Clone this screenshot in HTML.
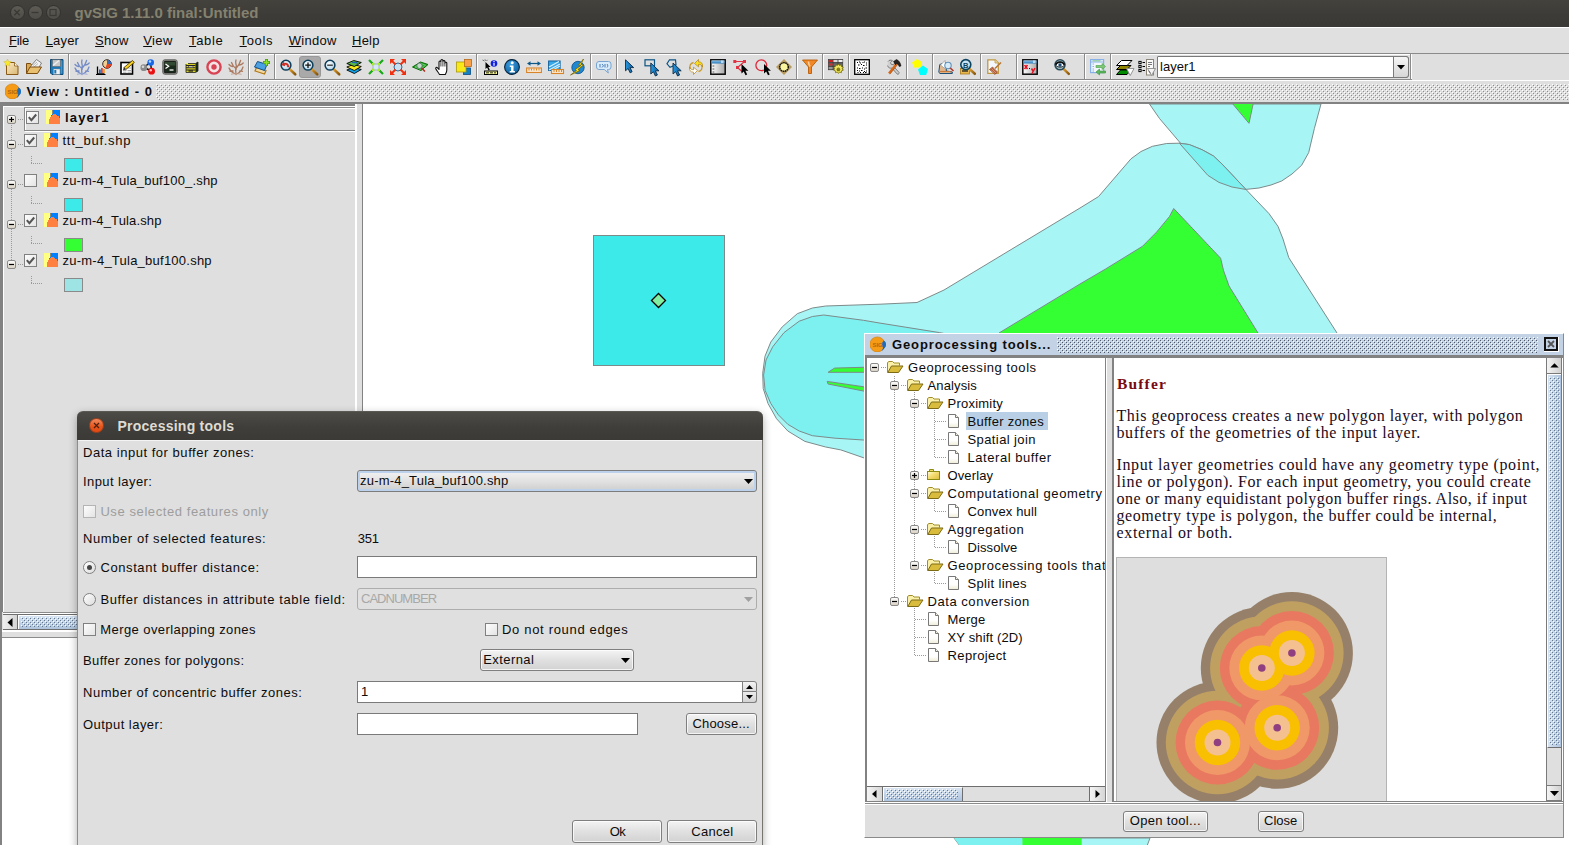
<!DOCTYPE html>
<html><head><meta charset="utf-8"><title>gvSIG</title>
<style>
html,body{margin:0;padding:0;}
body{width:1569px;height:845px;overflow:hidden;background:#e0e0e0;position:relative;font-family:"Liberation Sans",sans-serif;}
.t{position:absolute;white-space:pre;line-height:20px;font-family:"Liberation Sans",sans-serif;}
.sf{font-family:"Liberation Serif",serif;}
.b{font-weight:bold;}
.t u{text-decoration:underline;text-underline-offset:1px;text-decoration-thickness:1px;}
div,svg{box-sizing:border-box;}
.abs{position:absolute;}
.btn{position:absolute;border:1px solid #7f7f7f;border-radius:3px;background:linear-gradient(#f4f4f4,#e2e2e2 45%,#d2d2d2);box-shadow:inset 0 0 0 1px rgba(255,255,255,.75);}
.tf{position:absolute;background:#fff;border:1px solid #7a7a7a;}
.cb{position:absolute;width:13px;height:13px;border:1px solid #808080;background:linear-gradient(135deg,#fdfdfd,#e4e4e4);}
.rb{position:absolute;width:13px;height:13px;border:1px solid #808080;border-radius:50%;background:linear-gradient(135deg,#ffffff,#dcdcdc);}
.vs{position:absolute;width:1px;background:#8b8b8b;box-shadow:1px 0 0 #fff;}
</style></head>
<body>
<div style="position:absolute;left:0px;top:0px;width:1569px;height:27px;background:linear-gradient(#43423d,#3c3b37 60%,#3a3935);"></div>
<div style="position:absolute;left:9.5px;top:5.0px;width:15px;height:15px;border-radius:50%;background:linear-gradient(#5d5b54,#4f4d47);border:1px solid #33322e;"></div>
<div style="position:absolute;left:27.5px;top:5.0px;width:15px;height:15px;border-radius:50%;background:linear-gradient(#5d5b54,#4f4d47);border:1px solid #33322e;"></div>
<div style="position:absolute;left:45.5px;top:5.0px;width:15px;height:15px;border-radius:50%;background:linear-gradient(#5d5b54,#4f4d47);border:1px solid #33322e;"></div>
<svg class="abs" style="left:0;top:0" width="70" height="27"><path d="M14.300 9.800l5.400 5.400M19.700 9.800l-5.400 5.400" stroke="#3a3934" stroke-width="1.300" fill="none"/><path d="M31.500 12.500h7" stroke="#3a3934" stroke-width="1.300"/><rect x="50" y="9.500" width="6" height="6" stroke="#3a3934" stroke-width="1.200" fill="none"/></svg>
<span class="t b" style="left:74.5px;top:2.80px;font-size:15px;letter-spacing:-0.01px;color:#85816f;">gvSIG 1.11.0 final:Untitled</span>
<div style="position:absolute;left:0px;top:27px;width:1569px;height:26px;background:#e0e0e0;border-top:1px solid #fff;"></div>
<span class="t" style="left:9px;top:30.50px;font-size:13px;letter-spacing:-0.25px;color:#0c0c0c;"><u>F</u>ile</span>
<span class="t" style="left:45.7px;top:30.50px;font-size:13px;letter-spacing:0.17px;color:#0c0c0c;"><u>L</u>ayer</span>
<span class="t" style="left:95.1px;top:30.50px;font-size:13px;letter-spacing:0.22px;color:#0c0c0c;"><u>S</u>how</span>
<span class="t" style="left:143.2px;top:30.50px;font-size:13px;letter-spacing:0.42px;color:#0c0c0c;"><u>V</u>iew</span>
<span class="t" style="left:189px;top:30.50px;font-size:13px;letter-spacing:0.66px;color:#0c0c0c;"><u>T</u>able</span>
<span class="t" style="left:239.6px;top:30.50px;font-size:13px;letter-spacing:0.64px;color:#0c0c0c;"><u>T</u>ools</span>
<span class="t" style="left:288.7px;top:30.50px;font-size:13px;letter-spacing:0.29px;color:#0c0c0c;"><u>W</u>indow</span>
<span class="t" style="left:352px;top:30.50px;font-size:13px;letter-spacing:0.25px;color:#0c0c0c;"><u>H</u>elp</span>
<div style="position:absolute;left:0px;top:53px;width:1569px;height:1px;background:#8b8b8b;"></div>
<div style="position:absolute;left:0px;top:54px;width:1569px;height:1px;background:#fff;"></div>
<div style="position:absolute;left:0px;top:55px;width:1569px;height:24px;background:#dfdfdf;"></div>
<div style="position:absolute;left:0px;top:79px;width:1569px;height:1px;background:#8b8b8b;"></div>
<div style="position:absolute;left:0px;top:80px;width:1569px;height:1px;background:#fff;"></div>
<div class="vs" style="left:68px;top:54px;height:25px"></div>
<div class="vs" style="left:248px;top:54px;height:25px"></div>
<div class="vs" style="left:274px;top:54px;height:25px"></div>
<div class="vs" style="left:476px;top:54px;height:25px"></div>
<div class="vs" style="left:590px;top:54px;height:25px"></div>
<div class="vs" style="left:616px;top:54px;height:25px"></div>
<div class="vs" style="left:796px;top:54px;height:25px"></div>
<div class="vs" style="left:822px;top:54px;height:25px"></div>
<div class="vs" style="left:848px;top:54px;height:25px"></div>
<div class="vs" style="left:906px;top:54px;height:25px"></div>
<div class="vs" style="left:932px;top:54px;height:25px"></div>
<div class="vs" style="left:980px;top:54px;height:25px"></div>
<div class="vs" style="left:1016px;top:54px;height:25px"></div>
<div class="vs" style="left:1084px;top:54px;height:25px"></div>
<div class="vs" style="left:1110px;top:54px;height:25px"></div>
<div class="vs" style="left:1410px;top:54px;height:25px"></div>
<div style="position:absolute;left:1412px;top:54px;width:157px;height:26px;background:#dfdfdf;"></div>
<div style="position:absolute;left:299px;top:56px;width:22px;height:22px;background:#a9a9a9;border:1px solid #989898;border-radius:3px;"></div>
<div style="position:absolute;left:1157px;top:56px;width:252px;height:22px;border:1px solid #7a7a7a;background:#fff;border-radius:1px 3px 3px 1px;"></div>
<div style="position:absolute;left:1393px;top:56px;width:16px;height:22px;border:1px solid #7a7a7a;border-radius:0 3px 3px 0;background:linear-gradient(#f6f6f6,#d6d6d6);"></div>
<svg class="abs" style="left:1396px;top:64px" width="10" height="6"><path d="M1 1h8l-4 4.500z" fill="#000"/></svg>
<span class="t" style="left:1160px;top:56.50px;font-size:13px;letter-spacing:0.02px;color:#0c0c0c;">layer1</span>
<div style="position:absolute;left:0px;top:81px;width:1569px;height:21px;background:#dfdfdf;"></div>
<svg class="abs" style="left:156px;top:84px" width="1413" height="16" shape-rendering="crispEdges"><defs><pattern id="bp1" width="4" height="4" patternUnits="userSpaceOnUse"><rect width="4" height="4" fill="#dfdfdf"/><rect x="0" y="0" width="1" height="1" fill="#ffffff"/><rect x="2" y="2" width="1" height="1" fill="#ffffff"/><rect x="1" y="1" width="1" height="1" fill="#8c8c8c"/><rect x="3" y="3" width="1" height="1" fill="#8c8c8c"/></pattern></defs><rect width="1413" height="16" fill="url(#bp1)"/></svg>
<svg class="abs" style="left:5px;top:83px" width="16" height="16" viewBox="0 0 16 16"><circle cx="7.300" cy="8.400" r="7.500" fill="#f59b16"/><circle cx="7.300" cy="8.400" r="7.500" fill="none" stroke="#d07c08" stroke-width=".6"/><path d="M13.200 4.200c3.800 2.300 3.200 7.500-1.800 11c2.300-3.300 3-7 1.800-11z" fill="#1766b4"/><ellipse cx="14" cy="8.500" rx="1.900" ry="3.200" fill="#1a6cbc"/><text x="7.600" y="11.300" font-family="Liberation Sans" font-weight="bold" font-size="6" fill="#b4680c" text-anchor="middle">SIG</text></svg>
<span class="t b" style="left:26.5px;top:81.50px;font-size:13px;letter-spacing:0.96px;color:#0c0c0c;">View : Untitled - 0</span>
<div style="position:absolute;left:0px;top:102px;width:1569px;height:2px;background:#828282;"></div>
<svg width="0" height="0" style="position:absolute"><defs><linearGradient id="gTan" x1="0" y1="0" x2="1" y2="1"><stop offset="0" stop-color="#fbe9c4"/><stop offset="1" stop-color="#d9b772"/></linearGradient><linearGradient id="gHandle" x1="0" y1="0" x2="1" y2="1"><stop offset="0" stop-color="#e0a030"/><stop offset="1" stop-color="#8a5a10"/></linearGradient><radialGradient id="gLens" cx=".4" cy=".35" r=".7"><stop offset="0" stop-color="#ffffff"/><stop offset="1" stop-color="#a8d0e8"/></radialGradient><linearGradient id="gWin" x1="0" y1="0" x2="1" y2="0"><stop offset="0" stop-color="#ffffff"/><stop offset="1" stop-color="#a8a8a8"/></linearGradient><linearGradient id="gBlueT" x1="0" y1="0" x2="0" y2="1"><stop offset="0" stop-color="#8cc4ec"/><stop offset="1" stop-color="#2878b8"/></linearGradient><radialGradient id="gInfo" cx=".4" cy=".3" r=".8"><stop offset="0" stop-color="#3a9ce0"/><stop offset="1" stop-color="#0a5a98"/></radialGradient><linearGradient id="gCur" x1="0" y1="0" x2="1" y2="0"><stop offset="0" stop-color="#2a98e0"/><stop offset="1" stop-color="#0c5c9c"/></linearGradient></defs></svg>
<svg class="abs" style="left:4px;top:59px;overflow:visible" width="16" height="16" viewBox="0 0 16 16"><path d="M2.500 3.500h8l3.500 3.500v8.500h-11.500z" fill="url(#gTan)" stroke="#8a5a14" stroke-width="1"/><path d="M10.500 3.500v3.500h3.500" fill="#fff" stroke="#8a5a14" stroke-width=".8"/><path d="M3.500 0l1.100 2.400l2.600.3l-1.900 1.800l.5 2.600l-2.300-1.300l-2.300 1.300l.5-2.600l-1.900-1.800l2.600-.3z" fill="#f8e830" stroke="#c8b010" stroke-width=".4"/></svg>
<svg class="abs" style="left:26px;top:59px;overflow:visible" width="16" height="16" viewBox="0 0 16 16"><path d="M.5 14.500v-10h4l1 1.500h5v2" fill="#d9a850" stroke="#7a4c10" stroke-width="1"/><path d="M4 8l6.500-7.500l5 3.500l-3.500 6z" fill="#f4f4f4" stroke="#666" stroke-width=".8"/><path d="M7 6.500l4-3.500M8 8l4-3.500" stroke="#999" stroke-width=".7"/><path d="M.5 14.500l3.500-6.500h11.500l-4 6.500z" fill="#e8c070" stroke="#7a4c10" stroke-width="1"/></svg>
<svg class="abs" style="left:49px;top:59px;overflow:visible" width="16" height="16" viewBox="0 0 16 16"><path d="M1.500 .5h12.500v15h-11l-1.500-1.500z" fill="#1a78b8" stroke="#0c4a78" stroke-width="1"/><rect x="3.500" y=".8" width="8" height="6.700" fill="#c8c8c8" stroke="#666" stroke-width=".6"/><path d="M4 6.500l6-5" stroke="#eee" stroke-width="1.500"/><rect x="4.500" y="10" width="6.500" height="5.300" fill="#f0f0f0" stroke="#888" stroke-width=".5"/><rect x="5.300" y="11" width="2" height="3.500" fill="#1a78b8"/><path d="M12.800 1.500v13" stroke="#5ab0e8" stroke-width=".8"/></svg>
<svg class="abs" style="left:74px;top:59px;overflow:visible" width="16" height="16" viewBox="0 0 16 16"><g stroke="#6e86c4" stroke-width="1.300" fill="none" stroke-linecap="round" opacity=".95"><path d="M8 15.500c-.5-3-.5-6 .3-9.500M8.300 10c-2-1.500-4-4-4.800-6.500M8.300 9c2-2 3.500-4.500 4.300-7.500M6.500 14.500c-2.500-1-4.500-3-5.500-5.500M9.500 14.500c2.500-1 4.500-3.500 5.500-6.500M4.500 7.500c-1.300-.3-2.500-1-3.500-2M11.500 6c1.500-.3 2.800-1 3.700-2M8 5.500c-.5-1.500-.5-3 0-4.500M5 12c-1-.2-2-.2-3 .3M11.500 12c1-.3 2-.2 3 .3"/></g><path d="M3 15.300c3-.8 7-.8 10.500 0" stroke="#8ea0d0" stroke-width="1" fill="none" opacity=".8"/></svg>
<svg class="abs" style="left:96px;top:59px;overflow:visible" width="16" height="16" viewBox="0 0 16 16"><circle cx="11" cy="5" r="4.300" fill="#f0d090" stroke="#3a2a20" stroke-width="1"/><path d="M11 5v-4.300a4.300 4.300 0 0 1 4.300 4.300z" fill="#3868b8"/><path d="M11 5h4.300a4.300 4.300 0 0 1 -6 3.900z" fill="#e04828"/><path d="M1.500 7.500v7.500h7" stroke="#000" stroke-width="1.300" fill="none"/><rect x="3" y="10.500" width="1.800" height="3.500" fill="#3060b0"/><rect x="5" y="9" width="1.800" height="5" fill="#e04828"/><rect x="7" y="10" width="1.800" height="4" fill="#e8a020"/><path d="M0 15.500h9.500" stroke="#000" stroke-width="1"/></svg>
<svg class="abs" style="left:120px;top:59px;overflow:visible" width="16" height="16" viewBox="0 0 16 16"><rect x="1" y="3.500" width="11.500" height="11.500" fill="#fff" stroke="#000" stroke-width="1.600"/><path d="M3 9h3.500M7.500 9h3.500M3 11.500h3.500M7.500 11.500h3.500M3 13.200h3.500M7.500 13.200h3.500" stroke="#aaa" stroke-width="1"/><path d="M4 8.500l8.500-7l1.800 2l-8.500 7z" fill="#f8d020" stroke="#3a2a00" stroke-width=".8"/><path d="M4 8.500l-1 2.800l2.800-.8z" fill="#222"/></svg>
<svg class="abs" style="left:140px;top:59px;overflow:visible" width="16" height="16" viewBox="0 0 16 16"><path d="M4 8.500l6.500-5.500M10.500 3.500l1 8M4 8.500l7.500 3.500" stroke="#111" stroke-width="1.500"/><circle cx="3.800" cy="8.700" r="3.400" fill="#8a8a8a"/><circle cx="3" cy="7.800" r="1.300" fill="#d8d8d8"/><circle cx="10.700" cy="3.500" r="3.300" fill="#1868e8"/><circle cx="10" cy="2.500" r="1.200" fill="#b8d8ff"/><circle cx="11.600" cy="12.200" r="3.400" fill="#e81010"/><circle cx="10.800" cy="11.200" r="1.200" fill="#ffc0c0"/></svg>
<svg class="abs" style="left:162px;top:59px;overflow:visible" width="16" height="16" viewBox="0 0 16 16"><rect x=".7" y=".7" width="14.600" height="14.600" rx="2.200" fill="#8c8c84" stroke="#555" stroke-width=".8"/><rect x="2.300" y="2.300" width="11.400" height="11.400" rx=".8" fill="#1a2a1a" stroke="#000" stroke-width=".6"/><path d="M2.600 3h10.800v3.500h-10.800z" fill="#3a5238" opacity=".8"/><path d="M3.500 5l3.200 2.200l-3.200 2.200" stroke="#fff" stroke-width="1.200" fill="none"/><path d="M7.500 11h4" stroke="#fff" stroke-width="1.300"/></svg>
<svg class="abs" style="left:185px;top:59px;overflow:visible" width="16" height="16" viewBox="0 0 16 16"><path d="M1 4.500h9.500l2.500-1.500v9l-2.500 1.500h-9.500z" fill="#d8d020" stroke="#222" stroke-width=".8"/><path d="M10.500 4.500l2.500-1.500v9l-2.500 1.500z" fill="#1a2a10"/><path d="M1 6.500h9.500M1 8.800h9.500M1 11h9.500" stroke="#222" stroke-width="1.100"/><rect x="3.500" y="7" width="4.500" height="1.500" fill="#f0f0e0" stroke="#222" stroke-width=".5"/><rect x="3.500" y="11.300" width="4.500" height="1.300" fill="#222"/><path d="M0 4.500h3" stroke="#f0f080" stroke-width="1"/></svg>
<svg class="abs" style="left:206px;top:59px;overflow:visible" width="16" height="16" viewBox="0 0 16 16"><circle cx="8" cy="8" r="6.600" fill="#f4e4e4" stroke="#d84454" stroke-width="2.400"/><circle cx="8" cy="8" r="2.700" fill="#d84454"/></svg>
<svg class="abs" style="left:228px;top:59px;overflow:visible" width="16" height="16" viewBox="0 0 16 16"><g stroke="#a87458" stroke-width="1.300" fill="none" stroke-linecap="round" opacity=".95"><path d="M8 15.500c-.5-3-.5-6 .3-9.500M8.300 10c-2-1.500-4-4-4.800-6.500M8.300 9c2-2 3.500-4.500 4.300-7.500M6.500 14.500c-2.500-1-4.500-3-5.500-5.500M9.500 14.500c2.500-1 4.500-3.500 5.500-6.500M4.500 7.500c-1.300-.3-2.500-1-3.500-2M11.500 6c1.500-.3 2.800-1 3.700-2M8 5.500c-.5-1.500-.5-3 0-4.500M5 12c-1-.2-2-.2-3 .3M11.500 12c1-.3 2-.2 3 .3"/></g><path d="M3 15.300c3-.8 7-.8 10.500 0" stroke="#c09888" stroke-width="1" fill="none" opacity=".8"/></svg>
<svg class="abs" style="left:254px;top:59px;overflow:visible" width="16" height="16" viewBox="0 0 16 16"><path d="M2.500 8.500l9.500 3l-1.500 3.500l-9.500-3z" fill="#f0d8a0" stroke="#b07818" stroke-width="1.200"/><path d="M3.500 2.500l9.500 3l-2.500 6l-10-3.500z" fill="#4aa0e0" stroke="#10508c" stroke-width="1"/><path d="M12.500 0v7M9 3.500h7" stroke="#48a010" stroke-width="3"/><path d="M12.500 .8v5.400M9.800 3.500h5.400" stroke="#90e030" stroke-width="1.400"/></svg>
<svg class="abs" style="left:279.5px;top:58.5px;overflow:visible" width="16" height="17" viewBox="0 0 16 17"><path d="M10 10.500l5.200 4.800" stroke="url(#gHandle)" stroke-width="2.600" stroke-linecap="round"/><path d="M10 10.500l5.200 4.800" stroke="#7a4c08" stroke-width=".5" fill="none" opacity=".6" transform="translate(.9 .9)"/><circle cx="6" cy="6.200" r="4.900" fill="url(#gLens)" stroke="#0c3c58" stroke-width="1.500"/><path transform="translate(12 .4) scale(-1 1)" d="M3 7.500c0-3 2.500-4.500 5-3.500l.3-1.500l2 3l-3.300 1l.4-1.300c-1.500-.5-3 .5-2.800 2.300z" fill="#e02818" stroke="#a01008" stroke-width=".4"/></svg>
<svg class="abs" style="left:301.5px;top:58.5px;overflow:visible" width="16" height="17" viewBox="0 0 16 17"><path d="M10 10.500l5.200 4.800" stroke="url(#gHandle)" stroke-width="2.600" stroke-linecap="round"/><path d="M10 10.500l5.200 4.800" stroke="#7a4c08" stroke-width=".5" fill="none" opacity=".6" transform="translate(.9 .9)"/><circle cx="6" cy="6.200" r="4.900" fill="url(#gLens)" stroke="#0c3c58" stroke-width="1.500"/><path d="M6 3.400v5.600M3.200 6.200h5.600" stroke="#111" stroke-width="1.300"/></svg>
<svg class="abs" style="left:323.5px;top:58.5px;overflow:visible" width="16" height="17" viewBox="0 0 16 17"><path d="M10 10.500l5.200 4.800" stroke="url(#gHandle)" stroke-width="2.600" stroke-linecap="round"/><path d="M10 10.500l5.200 4.800" stroke="#7a4c08" stroke-width=".5" fill="none" opacity=".6" transform="translate(.9 .9)"/><circle cx="6" cy="6.200" r="4.900" fill="url(#gLens)" stroke="#0c3c58" stroke-width="1.500"/><path d="M3.200 6.200h5.600" stroke="#333" stroke-width="1.300"/></svg>
<svg class="abs" style="left:346px;top:59px;overflow:visible" width="16" height="16" viewBox="0 0 16 16"><path d="M.8 11l6.500-2.500l8 2l-7 4z" fill="#10a0e8" stroke="#000" stroke-width=".9"/><path d="M.8 8l6.500-2.500l8 2l-7 4z" fill="#f8e820" stroke="#000" stroke-width=".9"/><path d="M.8 4.500l7-3l7.500 2l-7 4z" fill="#58b848" stroke="#000" stroke-width=".9"/><path d="M6 3.500c1.500-1 3 1 4.500 0c1 .5 1 1.500 .5 2" stroke="#1858c0" stroke-width="1.200" fill="none"/></svg>
<svg class="abs" style="left:368px;top:59px;overflow:visible" width="16" height="16" viewBox="0 0 16 16"><path d="M1 1l14 14M15 1l-14 14" stroke="#18a818" stroke-width="2.200"/><rect x="5" y="5" width="6" height="6" fill="#d8e8f8" stroke="#90a8c8" stroke-width=".8"/><rect x="4" y="4" width="2.300" height="2.300" fill="#a8f020"/><rect x="9.700" y="4" width="2.300" height="2.300" fill="#a8f020"/><rect x="4" y="9.700" width="2.300" height="2.300" fill="#a8f020"/><rect x="9.700" y="9.700" width="2.300" height="2.300" fill="#a8f020"/></svg>
<svg class="abs" style="left:390px;top:59px;overflow:visible" width="16" height="16" viewBox="0 0 16 16"><circle cx="8" cy="8" r="4" fill="#c8e0f0" stroke="#306890" stroke-width="1"/><path d="M5.500 5.500l-4-4M10.500 5.500l4-4M5.500 10.500l-4 4M10.500 10.500l4 4" stroke="#f03010" stroke-width="2"/><path d="M0 0h5l-5 5zM16 0h-5l5 5zM0 16h5l-5-5zM16 16h-5l5-5z" fill="#f03010"/></svg>
<svg class="abs" style="left:412px;top:59px;overflow:visible" width="16" height="16" viewBox="0 0 16 16"><path d="M.5 8l8-5l7.500 2.500l-7 6z" fill="#28a828" stroke="#0c6c0c" stroke-width="1"/><path d="M3 8l5.500-3.500l5 1.700l-5 4z" fill="none" stroke="#7ae07a" stroke-width=".7"/><circle cx="7.500" cy="6.800" r="2.700" fill="#c8d8d0" stroke="#587868" stroke-width=".9"/><path d="M9.500 9l3.500 3.500" stroke="#a83020" stroke-width="1.600"/></svg>
<svg class="abs" style="left:435px;top:59px;overflow:visible" width="16" height="16" viewBox="0 0 16 16"><path d="M4.500 15.500c-1-2-3-4-3.800-6c-.3-1 1-1.600 1.800-.7l1.500 1.700v-7.500c0-1.300 1.900-1.300 1.900 0v-1.500c0-1.300 2-1.300 2 0v1c0-1.200 2-1.200 2 0v1.500c0-1.100 1.900-1.100 1.900 0v7c0 2-1 3.500-1.500 4.500z" fill="#fff" stroke="#111" stroke-width="1.100" stroke-linejoin="round"/><path d="M5.900 3.500v4M7.900 3v4.500M9.900 4v3.500" stroke="#111" stroke-width=".8"/></svg>
<svg class="abs" style="left:456px;top:59px;overflow:visible" width="16" height="16" viewBox="0 0 16 16"><rect x="7.500" y="9" width="7" height="6.500" fill="#1080c8" stroke="#0a4a80" stroke-width=".8"/><rect x=".5" y="3" width="9.500" height="10" fill="#f8e818" stroke="#a89808" stroke-width=".8"/><rect x="8.500" y=".5" width="7" height="7" fill="#f8a048" stroke="#b86818" stroke-width=".8"/></svg>
<svg class="abs" style="left:482px;top:59px;overflow:visible" width="16" height="16" viewBox="0 0 16 16"><circle cx="12" cy="4.500" r="3.300" fill="#1020e0"/><rect x="11.400" y="3.800" width="1.200" height="3" fill="#fff"/><rect x="11.400" y="2" width="1.200" height="1.100" fill="#fff"/><path d="M.5 1l2 1M3 .3l.5 1.500M5.500 .8l-1 1.200" stroke="#444" stroke-width=".7"/><path d="M3.500 3v7l1.600-1.400l1.400 2.800l1.300-.6l-1.400-2.800h2.200z" fill="#000"/><rect x="2.500" y="12" width="13" height="3.500" fill="#f4f490" stroke="#000" stroke-width="1"/><path d="M4 13.800h3M8 13.800h3M12 13.800h2" stroke="#000" stroke-width=".8"/></svg>
<svg class="abs" style="left:504px;top:59px;overflow:visible" width="16" height="16" viewBox="0 0 16 16"><circle cx="8" cy="8" r="7.400" fill="url(#gInfo)" stroke="#06243c" stroke-width="1.100"/><circle cx="8.200" cy="3.800" r="1.500" fill="#fff"/><path d="M5.800 6.500h3.700v5.500h1.400v1.400h-5.200v-1.400h1.400v-4h-1.300z" fill="#fff"/></svg>
<svg class="abs" style="left:526px;top:59px;overflow:visible" width="16" height="16" viewBox="0 0 16 16"><path d="M3 4.500h10" stroke="#0c5888" stroke-width="1.200"/><path d="M1 4.500l3.500-2.300v4.600zM15 4.500l-3.500-2.300v4.600z" fill="#0c5888"/><rect x=".6" y="9" width="14.8" height="4.500" fill="#fbe8d0" stroke="#d88428" stroke-width="1.100"/><path d="M3 9.500v2M5.500 9.500v2M8 9.500v2M10.500 9.500v2M13 9.500v2" stroke="#d88428" stroke-width="1"/></svg>
<svg class="abs" style="left:548px;top:59px;overflow:visible" width="16" height="16" viewBox="0 0 16 16"><rect x=".6" y="2" width="11.500" height="9.500" fill="#38a8e8" stroke="#10609c" stroke-width="1"/><path d="M1 8l10-5.500M1 11l11-6M4 11.500l8-4.500" stroke="#d8f0ff" stroke-width="1.200"/><rect x="3.500" y="10.500" width="12" height="4" fill="#fbe8d0" stroke="#d88428" stroke-width="1.100"/><path d="M6 11v2M8.500 11v2M11 11v2M13.500 11v2" stroke="#d88428" stroke-width="1"/></svg>
<svg class="abs" style="left:570px;top:59px;overflow:visible" width="16" height="16" viewBox="0 0 16 16"><circle cx="8" cy="8.500" r="6.200" fill="#2088d0" stroke="#0c4c88" stroke-width=".8"/><path d="M13.500 0l-5 6l2.500.5l-6 4l1.500 1l-6 4.500l9.500-4.500l-2-1l5.500-4.500l-2.500-.5z" fill="#f8e010" stroke="#705800" stroke-width=".7" stroke-linejoin="round"/></svg>
<svg class="abs" style="left:596px;top:59px;overflow:visible" width="16" height="16" viewBox="0 0 16 16"><path d="M3 2.500h9.500a2.500 2.500 0 0 1 2.500 2.500v3a2.500 2.500 0 0 1 -2.500 2.500h-1l.8 3.500l-4-3.500h-5.300a2.500 2.500 0 0 1 -2.500-2.500v-3a2.500 2.500 0 0 1 2.500-2.500z" fill="#d8ecfc" stroke="#7aa4d0" stroke-width="1"/><path d="M4 5v3.500M6 5l1.500 1.800l-1.500 1.700M9 5v3.500M11 5c1 1 1 2.500 0 3.500" stroke="#4a7ab8" stroke-width="1" fill="none"/></svg>
<svg class="abs" style="left:622px;top:59px;overflow:visible" width="16" height="16" viewBox="0 0 16 16"><path transform="translate(3.5 0.8)" d="M0 0v11l2.600-2.300l2 4.300l2-1l-2-4.200h3.600z" fill="url(#gCur)" stroke="#0a2c48" stroke-width=".9" stroke-linejoin="round"/></svg>
<svg class="abs" style="left:644px;top:59px;overflow:visible" width="16" height="16" viewBox="0 0 16 16"><rect x="1" y=".8" width="9.500" height="6" fill="none" stroke="#0c5484" stroke-width="1.200"/><path transform="translate(6.8 4)" d="M0 0v11l2.600-2.300l2 4.300l2-1l-2-4.200h3.600z" fill="url(#gCur)" stroke="#0a2c48" stroke-width=".9" stroke-linejoin="round"/></svg>
<svg class="abs" style="left:666px;top:59px;overflow:visible" width="16" height="16" viewBox="0 0 16 16"><path d="M3.500 .8h6l.5 5l-6 2.500l-3-3.500z" fill="none" stroke="#0c5484" stroke-width="1.200"/><path transform="translate(7 4)" d="M0 0v11l2.600-2.300l2 4.300l2-1l-2-4.200h3.600z" fill="url(#gCur)" stroke="#0a2c48" stroke-width=".9" stroke-linejoin="round"/></svg>
<svg class="abs" style="left:688px;top:59px;overflow:visible" width="16" height="16" viewBox="0 0 16 16"><path d="M2.500 10c-1.500-3 0-6 3-6.500" stroke="#c89828" stroke-width="1.300" fill="none"/><path d="M13.500 6c1.500 3 0 6-3 6.500" stroke="#c89828" stroke-width="1.300" fill="none"/><path d="M6.500 4.500l4-4v2.300c3 0 4.500 2 4 5c-.8-1.800-2-2.500-4-2.500v2.500z" fill="#f8e020" stroke="#b08010" stroke-width=".7"/><path d="M9.500 11.500l-4 4v-2.300c-3 0-4.500-2-4-5c.8 1.800 2 2.500 4 2.500v-2.500z" fill="#fff" stroke="#b08010" stroke-width=".7"/></svg>
<svg class="abs" style="left:710px;top:59px;overflow:visible" width="16" height="16" viewBox="0 0 16 16"><rect x=".8" y=".8" width="14.400" height="14.400" fill="url(#gWin)" stroke="#0a0a0a" stroke-width="1.500"/><rect x="1.500" y="1.500" width="13" height="3" fill="url(#gBlueT)"/><rect x="11" y="1.500" width="2.500" height="2.500" fill="#b8d8f4"/><path d="M2.500 7h1.800M2.500 10h1.800M2.500 13h1.800" stroke="#555" stroke-width="1"/></svg>
<svg class="abs" style="left:733px;top:59px;overflow:visible" width="16" height="16" viewBox="0 0 16 16"><path d="M1.500 2.500h10l-7 6l5 4.500" stroke="#e03444" stroke-width="1.200" fill="none"/><rect x=".3" y="1" width="3" height="3" fill="#e03444"/><rect x="10" y="1" width="3" height="3" fill="#e03444"/><rect x="3" y="7" width="3" height="3" fill="#e03444"/><path transform="translate(8.5 5)" d="M0 0v9.500l2.200-2l1.800 3.800l1.700-.8l-1.800-3.700h3z" fill="#000"/></svg>
<svg class="abs" style="left:754.5px;top:59px;overflow:visible" width="16" height="16" viewBox="0 0 16 16"><circle cx="6.300" cy="6.300" r="5.400" fill="none" stroke="#e02838" stroke-width="1.300"/><path transform="translate(9 5)" d="M0 0v9.500l2.200-2l1.800 3.800l1.700-.8l-1.800-3.700h3z" fill="#000"/></svg>
<svg class="abs" style="left:776px;top:59px;overflow:visible" width="16" height="16" viewBox="0 0 16 16"><path d="M8 0l8 8l-8 8l-8-8z" fill="#b89a5c"/><circle cx="8" cy="8" r="4.300" fill="#f8f4a0" stroke="#111" stroke-width="1.500" stroke-dasharray="1.600 .5"/></svg>
<svg class="abs" style="left:802px;top:59px;overflow:visible" width="16" height="16" viewBox="0 0 16 16"><path d="M.5 1h15l-6 7v6.500h-3v-6.500z" fill="#f08828" stroke="#b85c08" stroke-width=".9" stroke-linejoin="round"/><path d="M6.500 2.500c0 2 .8 4 1.500 5" stroke="#fcd0a0" stroke-width="1.600" fill="none"/></svg>
<svg class="abs" style="left:828px;top:59px;overflow:visible" width="16" height="16" viewBox="0 0 16 16"><rect x=".3" y=".3" width="14.500" height="10.500" fill="#6a6a6a" stroke="#333" stroke-width=".6"/><path d="M.3 3.800h14.500M.3 7.300h14.500M5 .3v10.500M10 .3v10.500" stroke="#333" stroke-width=".7"/><rect x=".8" y="1" width="3.800" height="2" fill="#e01818"/><rect x=".8" y="4.500" width="3.800" height="2" fill="#c83030"/><rect x="5.500" y="1" width="4" height="2" fill="#d8d8d8"/><rect x="10.500" y="1" width="4" height="2" fill="#f0f0f0"/><rect x=".8" y="8" width="3.800" height="2" fill="#999"/><path d="M10.500 4.500l1.300 1.700l2-.9l.2 2.200l2 .6l-1.200 1.800l1.200 1.700l-2 .7l-.2 2.200l-2-.9l-1.300 1.700l-1.300-1.700l-2 .9l-.2-2.200l-2-.7l1.200-1.700l-1.200-1.800l2-.6l.2-2.200l2 .9z" fill="#f0e860" stroke="#6a6000" stroke-width=".8" transform="translate(1.200 1) scale(.88)"/><circle cx="10.400" cy="10.400" r="1.500" fill="#8a8420" stroke="#4a4400" stroke-width=".5"/></svg>
<svg class="abs" style="left:854px;top:59px;overflow:visible" width="16" height="16" viewBox="0 0 16 16"><rect x=".7" y=".7" width="14.600" height="14.600" fill="#fff" stroke="#000" stroke-width="1.300"/><rect x="3" y="3" width="1" height="1" fill="#000"/><rect x="5" y="2.5" width="1" height="1" fill="#000"/><rect x="6" y="3.5" width="1" height="1" fill="#000"/><rect x="8.5" y="3" width="1" height="1" fill="#000"/><rect x="10" y="2.5" width="1" height="1" fill="#000"/><rect x="12" y="3.5" width="1" height="1" fill="#000"/><rect x="4" y="5.5" width="1.5" height="1" fill="#000"/><rect x="7" y="5" width="1" height="1" fill="#000"/><rect x="9" y="6" width="1.5" height="1" fill="#000"/><rect x="12" y="5.5" width="1" height="1" fill="#000"/><rect x="3" y="8.5" width="1" height="1" fill="#000"/><rect x="5" y="9" width="1.5" height="1" fill="#000"/><rect x="8" y="8.5" width="1" height="1" fill="#000"/><rect x="10" y="9.5" width="1" height="1" fill="#000"/><rect x="11.5" y="8.5" width="1.5" height="1" fill="#000"/><rect x="3" y="11" width="1" height="1" fill="#000"/><rect x="5" y="11.5" width="1" height="1" fill="#000"/><rect x="7" y="11" width="1.5" height="1" fill="#000"/><rect x="10" y="12" width="1" height="1" fill="#000"/><rect x="12" y="11.5" width="1" height="1" fill="#000"/><rect x="3.5" y="13" width="1" height="1" fill="#000"/><rect x="6" y="13" width="1" height="1" fill="#000"/><rect x="9" y="13" width="1" height="1" fill="#000"/><rect x="11" y="13" width="1.5" height="1" fill="#000"/></svg>
<svg class="abs" style="left:886px;top:59px;overflow:visible" width="16" height="16" viewBox="0 0 16 16"><path d="M2 2.500c1-1.500 3-1.800 4.500-.8l-2 2l.8 1.700l2 .3l1.700-2c.8 1.500.3 3.300-1 4.200l5 5.500c.8 1-1 2.500-2 1.500l-5-5.800c-2 .5-4-.5-4.500-2.500" fill="#d0d0d0" stroke="#666" stroke-width=".8"/><path d="M3 14.500l7.500-9.500" stroke="#d86818" stroke-width="2.400"/><path d="M3 14.500l7.500-9.500" stroke="#8a3c08" stroke-width=".5" transform="translate(1 .7)"/><path d="M7.500 2.500l3-2c2.500 1 4 3.500 4.500 6.500l-1.800.5c-.5-1.500-1.500-2.500-2.700-2.800l-1 1z" fill="#2a2420" stroke="#000" stroke-width=".5"/></svg>
<svg class="abs" style="left:912px;top:59px;overflow:visible" width="17" height="16" viewBox="0 0 17 16"><path d="M5 0l5 3l-1.500 5.500h-6.500l-2-5z" fill="#ffff00"/><path d="M11 6.500l5 3.500l-1.800 6h-6.200l-2-5.500z" fill="#00ffff"/></svg>
<svg class="abs" style="left:938px;top:59px;overflow:visible" width="16" height="16" viewBox="0 0 16 16"><path d="M.8 13l1-7.500l5.500-2l1 .5v8l6 1v1.500h-12.500z" fill="#e0b890" stroke="#1a5078" stroke-width="1"/><path d="M2.500 6l4.500-4.500l1 9z" fill="#fff" stroke="#888" stroke-width=".6"/><path d="M1.500 12.500h11" stroke="#c87838" stroke-width="1.200"/><circle cx="10" cy="6.500" r="3.200" fill="#d8ecf8" stroke="#6090b8" stroke-width="1.100"/><path d="M12.300 9l3.200 3" stroke="#b83828" stroke-width="1.600"/></svg>
<svg class="abs" style="left:960px;top:59px;overflow:visible" width="16" height="16" viewBox="0 0 16 16"><rect x=".5" y="9.500" width="9" height="5.500" fill="#e8b850" stroke="#a87818" stroke-width=".8"/><path d="M2 12h6" stroke="#111" stroke-width="1.200"/><path d="M9.500 10l5.300 4.800" stroke="url(#gHandle)" stroke-width="2.500" stroke-linecap="round"/><circle cx="5.800" cy="5.600" r="5" fill="#c8e4f4" stroke="#0c4460" stroke-width="1.600"/><text x="5.800" y="8.500" text-anchor="middle" font-family="Liberation Sans" font-weight="bold" font-size="7.500" fill="#0c4460">B</text></svg>
<svg class="abs" style="left:987px;top:59px;overflow:visible" width="16" height="16" viewBox="0 0 16 16"><path d="M.8 .8h7.500l3 3v10.500h-10.500z" fill="#f4f8fc" stroke="#c09840" stroke-width="1.300"/><path d="M8 .8v3.200h3.300" fill="#e8d8a0" stroke="#c09840" stroke-width=".8"/><path d="M14 3.500l-6 6" stroke="#b87838" stroke-width="1.600"/><path d="M5.500 8l5 5l-2.500 2.500l-5.500-5z" fill="#b85c38" stroke="#7a3818" stroke-width=".6"/><path d="M4.500 9.500l4.500 4.500M6 8.500l4 4M3.500 11l4 3.500" stroke="#e8c0a0" stroke-width=".6"/></svg>
<svg class="abs" style="left:1022px;top:59px;overflow:visible" width="16" height="16" viewBox="0 0 16 16"><rect x=".8" y=".8" width="14.400" height="14.400" fill="url(#gWin)" stroke="#0a0a0a" stroke-width="1.500"/><rect x="1.500" y="1.500" width="13" height="3" fill="url(#gBlueT)"/><rect x="11" y="1.500" width="2.500" height="2.500" fill="#b8d8f4"/><path d="M2.500 6l3 4M5.500 6l-3 4" stroke="#e81020" stroke-width="1.500"/><path d="M9.500 9.500l1.500 2.500M13 9l-3 5.500" stroke="#e81020" stroke-width="1.500"/><rect x="7" y="9" width="1" height="1" fill="#111"/></svg>
<svg class="abs" style="left:1054px;top:59px;overflow:visible" width="16" height="16" viewBox="0 0 16 16"><path d="M9.500 9.800l5.300 5" stroke="url(#gHandle)" stroke-width="2.500" stroke-linecap="round"/><circle cx="6" cy="5.800" r="5" fill="#c8d8d8" stroke="#2a4a58" stroke-width="1.600"/><circle cx="6" cy="5.800" r="3.600" fill="none" stroke="#7aa8b0" stroke-width=".8"/><path d="M1.800 6.200c2-3.500 6.500-3.500 8.500 0c-2 2.500-6.500 2.500-8.500 0z" fill="#fff" stroke="#000" stroke-width=".9"/><circle cx="6" cy="6" r="1.700" fill="#184878"/><path d="M1.500 5.500c2-3.500 7-3.500 9 0" stroke="#000" stroke-width="1.300" fill="none"/></svg>
<svg class="abs" style="left:1090px;top:59px;overflow:visible" width="16" height="16" viewBox="0 0 16 16"><rect x=".6" y=".6" width="13" height="13" fill="#f0f6fc" stroke="#88b0e8" stroke-width="1.200"/><path d="M1 3h12" stroke="#88b0e8" stroke-width="1"/><path d="M2.500 1.800h8" stroke="#70c070" stroke-width=".8"/><path d="M2.500 5h1.500M2.500 7.500h1.500M2.500 10h1.500M2.500 12h1.500" stroke="#88b0e8" stroke-width="1.200"/><path d="M6 6.500h6v-2l3.500 3l-3.500 3v-2h-6z" fill="#80c878" stroke="#48a048" stroke-width=".6"/><path d="M15.500 12h-6v-2l-3.500 3l3.500 3v-2h6z" fill="#60b860" stroke="#389038" stroke-width=".6"/></svg>
<svg class="abs" style="left:1115px;top:59px;overflow:visible" width="20" height="17" viewBox="0 0 20 17"><path d="M1.500 15.500l4-4.500h10.500l-4 4.500z" fill="#008a00" stroke="#000" stroke-width="1"/><path d="M1.500 10.500l4-4h10.500l-4 4z" fill="#8c8400" stroke="#000" stroke-width="1"/><path d="M1.500 6.500l5-5h10.500l-5 5z" fill="#fff" stroke="#000" stroke-width="1"/><path d="M11.500 9.500h7.500l-3.750 7z" fill="#fff" stroke="#8a8a8a" stroke-width=".9"/></svg>
<svg class="abs" style="left:1138px;top:59px;overflow:visible" width="18" height="17" viewBox="0 0 18 17"><rect x="8.500" y=".5" width="7" height="15.500" fill="#fbfbfb" stroke="#8a8478" stroke-width="1"/><path d="M10 3.500h4M10 5.500h4M10 7.500h2" stroke="#555" stroke-width=".8"/><rect x=".9" y="2.400" width="2.200" height="2.200" fill="#fff" stroke="#000" stroke-width="1"/><rect x=".9" y="6.400" width="2.200" height="2.200" fill="#fff" stroke="#000" stroke-width="1"/><rect x=".9" y="10.400" width="2.200" height="2.200" fill="#fff" stroke="#000" stroke-width="1"/><path d="M4.500 3.500h2.500M4.500 7.500h2.500M4.500 11.500h2.500" stroke="#000" stroke-width="1.100"/><path d="M9.500 9.500h8l-4 7z" fill="#f4f4f4" stroke="#8a8a8a" stroke-width=".9"/><path d="M10.800 11.800l1.700 2.500" stroke="#555" stroke-width=".8"/></svg>
<svg class="abs" style="left:363px;top:104px" width="1206" height="741" viewBox="363 104 1206 741">
<rect x="363" y="104" width="1206" height="741" fill="#fff"/>
<rect x="593.500" y="235.500" width="131" height="130" fill="#3deaea" stroke="#7d8a8a" stroke-width="1"/>
<path d="M658.500 293.500l7 7l-7 7l-7-7z" fill="#80f0a0" stroke="#000" stroke-width="1.300"/>
<polygon points="1149.500,104 1159.500,118.500 1207.800,175.300 1219,182.400 1232,187 1244.800,189.500 1259,188 1271,185 1281.700,181 1292,174 1301.600,165.300 1308.700,152.600 1314.400,128.400 1321,104" fill="#a8f5f5" stroke="#7d8a8a" stroke-width="1"/>
<polygon points="880,304.200 917,302.500 944,290 1080,208 1098.500,196.600 1131,158.800 1141,151.500 1152.400,146.300 1166.600,143.500 1179.400,143.200 1189.400,144.600 1202,149.700 1213.500,156 1222,164 1246,189.500 1269,213.600 1278,226.400 1283,239 1288.800,257.700 1337,333 1350,353 1350,460 870,460 840.800,449.900 825.700,447 804.900,441.400 787.800,431 776.500,418.700 768,403.500 763.200,388.400 762.700,373.300 765,356.200 770.800,342 782.200,326.900 797.300,313.700 812.400,308 825.700,306" fill="#a8f5f5" stroke="#7d8a8a" stroke-width="1"/>
<polygon points="1179.400,143.200 1189.400,144.600 1202,149.700 1213.500,156 1222,164 1246,189.500 1232,187 1219,182.400 1207.800,175.300" fill="#7df0f0" stroke="#7d8a8a" stroke-width="1"/>
<polygon points="823.800,315 863.500,320.300 880,323.100 939.600,332.600 1000,345 1000,460 870,445 863.500,440 835.100,438.200 812.400,435.700 799.200,431 787.800,424.300 778.400,414.900 770.800,403.500 765.100,390.300 763.600,375.100 766,360 772.700,346.800 784,332.600 799.200,321.200 812.400,316.500" fill="#7df0f0" stroke="#7d8a8a" stroke-width="1"/>
<polygon points="999,333 1080,284 1105.600,269 1142.500,246.300 1156.700,232 1169.500,216.500 1173.700,208.500 1220.600,258.200 1223.500,270.500 1229,286 1258,333 1258,345 999,345" fill="#33ff33" stroke="#7d8a8a" stroke-width="1"/>
<polygon points="1232,103 1249,123.300 1253.300,103" fill="#33ff33" stroke="#7d8a8a" stroke-width="1"/>
<polygon points="828.100,372.300 834.600,368.100 870,367.100 870,372.300" fill="#33ff33" stroke="#7d8a8a" stroke-width="1"/>
<polygon points="827.200,381.400 870,387.700 870,392.300 828.100,384" fill="#33ff33" stroke="#7d8a8a" stroke-width="1"/>
<polygon points="954,838 1150,838 1147,846 960,846" fill="#a8f5f5" stroke="#7d8a8a" stroke-width="1"/>
<polygon points="954,838 1022.400,838 1022.400,846 960,846" fill="#7df0f0"/>
<rect x="1022.400" y="838" width="59.300" height="8" fill="#33ff33"/>
</svg>
<div style="position:absolute;left:363px;top:102px;width:1206px;height:2px;background:#828282;"></div>
<div style="position:absolute;left:0px;top:102px;width:355px;height:510px;background:#dfdfdf;"></div>
<div style="position:absolute;left:0px;top:102px;width:355px;height:4px;background:#828282;"></div>
<div style="position:absolute;left:0px;top:102px;width:3px;height:510px;background:#828282;"></div>
<div style="position:absolute;left:3px;top:106px;width:352px;height:1px;background:#fff;"></div>
<div style="position:absolute;left:3px;top:106px;width:1px;height:506px;background:#fff;"></div>
<div style="position:absolute;left:355px;top:104px;width:2px;height:741px;background:#fff;"></div>
<div style="position:absolute;left:357px;top:104px;width:5px;height:741px;background:#dfdfdf;"></div>
<div style="position:absolute;left:362px;top:102px;width:1px;height:743px;background:#828282;"></div>
<div style="position:absolute;left:25px;top:108px;width:330px;height:24px;border:1px solid #fff;border-right:none;"></div>
<div style="position:absolute;left:24px;top:107px;width:331px;height:24px;border:1px solid #8a8a8a;border-right:none;"></div>
<div style="position:absolute;left:11px;top:125px;width:1px;height:15px;background:repeating-linear-gradient(180deg,#9a9a9a 0 1px,transparent 1px 2px);"></div>
<div style="position:absolute;left:11px;top:149px;width:1px;height:31px;background:repeating-linear-gradient(180deg,#9a9a9a 0 1px,transparent 1px 2px);"></div>
<div style="position:absolute;left:11px;top:189px;width:1px;height:31px;background:repeating-linear-gradient(180deg,#9a9a9a 0 1px,transparent 1px 2px);"></div>
<div style="position:absolute;left:11px;top:229px;width:1px;height:31px;background:repeating-linear-gradient(180deg,#9a9a9a 0 1px,transparent 1px 2px);"></div>
<div style="position:absolute;left:18px;top:119px;width:5px;height:1px;background:repeating-linear-gradient(90deg,#9a9a9a 0 1px,transparent 1px 2px);"></div>
<svg class="abs" style="left:7px;top:115px" width="9" height="9" viewBox="0 0 9 9"><defs><linearGradient id="tg" x1="0" y1="0" x2="0" y2="1"><stop offset="0" stop-color="#fff"/><stop offset="1" stop-color="#d8d0c0"/></linearGradient></defs><rect x=".5" y=".5" width="8" height="8" rx="1.500" fill="url(#tg)" stroke="#8a8a8a"/><path d="M2 4.500h5" stroke="#000" stroke-width="1.200"/><path d="M4.500 2v5" stroke="#000" stroke-width="1.200"/></svg>
<div class="cb" style="left:26px;top:111px;border-color:#808080"></div><svg class="abs" style="left:26px;top:111px" width="13" height="13" viewBox="0 0 13 13"><path d="M2.800 6.200l2.600 3l4.800-5.700" stroke="#555" stroke-width="2" fill="none"/></svg>
<svg class="abs" style="left:46px;top:110px" width="14" height="14" viewBox="0 0 14 14" shape-rendering="crispEdges"><rect width="14" height="14" fill="#0080ff"/><path d="M0 0h7l-.5 3.500l-2 3.500l-1.500 5v2h-3z" fill="#ffff80"/><path d="M3 14v-3l1-3l2-2.500l1.500-1.500h1.500l1.500 1.500l2 1l1.500 2v5.500z" fill="#ff8040"/><path d="M6.500 0l-.3 3l1.300 1.500" stroke="#8a8a7a" stroke-width="1" fill="none"/></svg>
<span class="t b" style="left:65px;top:107.50px;font-size:13px;letter-spacing:1.16px;color:#0c0c0c;">layer1</span>
<svg class="abs" style="left:7px;top:140px" width="9" height="9" viewBox="0 0 9 9"><defs><linearGradient id="tg" x1="0" y1="0" x2="0" y2="1"><stop offset="0" stop-color="#fff"/><stop offset="1" stop-color="#d8d0c0"/></linearGradient></defs><rect x=".5" y=".5" width="8" height="8" rx="1.500" fill="url(#tg)" stroke="#8a8a8a"/><path d="M2 4.500h5" stroke="#000" stroke-width="1.200"/></svg>
<div style="position:absolute;left:18px;top:144px;width:5px;height:1px;background:repeating-linear-gradient(90deg,#9a9a9a 0 1px,transparent 1px 2px);"></div>
<div class="cb" style="left:24px;top:134px;border-color:#808080"></div><svg class="abs" style="left:24px;top:134px" width="13" height="13" viewBox="0 0 13 13"><path d="M2.800 6.200l2.600 3l4.800-5.700" stroke="#555" stroke-width="2" fill="none"/></svg>
<svg class="abs" style="left:44px;top:133px" width="14" height="14" viewBox="0 0 14 14" shape-rendering="crispEdges"><rect width="14" height="14" fill="#0080ff"/><path d="M0 0h7l-.5 3.500l-2 3.500l-1.500 5v2h-3z" fill="#ffff80"/><path d="M3 14v-3l1-3l2-2.500l1.500-1.500h1.500l1.500 1.500l2 1l1.500 2v5.500z" fill="#ff8040"/><path d="M6.500 0l-.3 3l1.300 1.500" stroke="#8a8a7a" stroke-width="1" fill="none"/></svg>
<span class="t" style="left:62.5px;top:130.50px;font-size:13px;letter-spacing:0.73px;color:#0c0c0c;">ttt_buf.shp</span>
<div style="position:absolute;left:31px;top:156px;width:1px;height:8px;background:repeating-linear-gradient(180deg,#9a9a9a 0 1px,transparent 1px 2px);"></div>
<div style="position:absolute;left:31px;top:163px;width:12px;height:1px;background:repeating-linear-gradient(90deg,#9a9a9a 0 1px,transparent 1px 2px);"></div>
<div style="position:absolute;left:64px;top:158px;width:19px;height:14px;background:#3deaea;border:1px solid #8a8a8a;"></div>
<svg class="abs" style="left:7px;top:180px" width="9" height="9" viewBox="0 0 9 9"><defs><linearGradient id="tg" x1="0" y1="0" x2="0" y2="1"><stop offset="0" stop-color="#fff"/><stop offset="1" stop-color="#d8d0c0"/></linearGradient></defs><rect x=".5" y=".5" width="8" height="8" rx="1.500" fill="url(#tg)" stroke="#8a8a8a"/><path d="M2 4.500h5" stroke="#000" stroke-width="1.200"/></svg>
<div style="position:absolute;left:18px;top:184px;width:5px;height:1px;background:repeating-linear-gradient(90deg,#9a9a9a 0 1px,transparent 1px 2px);"></div>
<div class="cb" style="left:24px;top:174px;border-color:#808080"></div>
<svg class="abs" style="left:44px;top:173px" width="14" height="14" viewBox="0 0 14 14" shape-rendering="crispEdges"><rect width="14" height="14" fill="#0080ff"/><path d="M0 0h7l-.5 3.500l-2 3.500l-1.500 5v2h-3z" fill="#ffff80"/><path d="M3 14v-3l1-3l2-2.500l1.500-1.500h1.500l1.500 1.500l2 1l1.500 2v5.500z" fill="#ff8040"/><path d="M6.500 0l-.3 3l1.300 1.500" stroke="#8a8a7a" stroke-width="1" fill="none"/></svg>
<span class="t" style="left:62.5px;top:170.50px;font-size:13px;letter-spacing:0.17px;color:#0c0c0c;">zu-m-4_Tula_buf100_.shp</span>
<div style="position:absolute;left:31px;top:196px;width:1px;height:8px;background:repeating-linear-gradient(180deg,#9a9a9a 0 1px,transparent 1px 2px);"></div>
<div style="position:absolute;left:31px;top:203px;width:12px;height:1px;background:repeating-linear-gradient(90deg,#9a9a9a 0 1px,transparent 1px 2px);"></div>
<div style="position:absolute;left:64px;top:198px;width:19px;height:14px;background:#3deaea;border:1px solid #8a8a8a;"></div>
<svg class="abs" style="left:7px;top:220px" width="9" height="9" viewBox="0 0 9 9"><defs><linearGradient id="tg" x1="0" y1="0" x2="0" y2="1"><stop offset="0" stop-color="#fff"/><stop offset="1" stop-color="#d8d0c0"/></linearGradient></defs><rect x=".5" y=".5" width="8" height="8" rx="1.500" fill="url(#tg)" stroke="#8a8a8a"/><path d="M2 4.500h5" stroke="#000" stroke-width="1.200"/></svg>
<div style="position:absolute;left:18px;top:224px;width:5px;height:1px;background:repeating-linear-gradient(90deg,#9a9a9a 0 1px,transparent 1px 2px);"></div>
<div class="cb" style="left:24px;top:214px;border-color:#808080"></div><svg class="abs" style="left:24px;top:214px" width="13" height="13" viewBox="0 0 13 13"><path d="M2.800 6.200l2.600 3l4.800-5.700" stroke="#555" stroke-width="2" fill="none"/></svg>
<svg class="abs" style="left:44px;top:213px" width="14" height="14" viewBox="0 0 14 14" shape-rendering="crispEdges"><rect width="14" height="14" fill="#0080ff"/><path d="M0 0h7l-.5 3.500l-2 3.500l-1.500 5v2h-3z" fill="#ffff80"/><path d="M3 14v-3l1-3l2-2.500l1.500-1.500h1.500l1.500 1.500l2 1l1.500 2v5.500z" fill="#ff8040"/><path d="M6.500 0l-.3 3l1.300 1.500" stroke="#8a8a7a" stroke-width="1" fill="none"/></svg>
<span class="t" style="left:62.5px;top:210.50px;font-size:13px;letter-spacing:0.13px;color:#0c0c0c;">zu-m-4_Tula.shp</span>
<div style="position:absolute;left:31px;top:236px;width:1px;height:8px;background:repeating-linear-gradient(180deg,#9a9a9a 0 1px,transparent 1px 2px);"></div>
<div style="position:absolute;left:31px;top:243px;width:12px;height:1px;background:repeating-linear-gradient(90deg,#9a9a9a 0 1px,transparent 1px 2px);"></div>
<div style="position:absolute;left:64px;top:238px;width:19px;height:14px;background:#33ff33;border:1px solid #8a8a8a;"></div>
<svg class="abs" style="left:7px;top:260px" width="9" height="9" viewBox="0 0 9 9"><defs><linearGradient id="tg" x1="0" y1="0" x2="0" y2="1"><stop offset="0" stop-color="#fff"/><stop offset="1" stop-color="#d8d0c0"/></linearGradient></defs><rect x=".5" y=".5" width="8" height="8" rx="1.500" fill="url(#tg)" stroke="#8a8a8a"/><path d="M2 4.500h5" stroke="#000" stroke-width="1.200"/></svg>
<div style="position:absolute;left:18px;top:264px;width:5px;height:1px;background:repeating-linear-gradient(90deg,#9a9a9a 0 1px,transparent 1px 2px);"></div>
<div class="cb" style="left:24px;top:254px;border-color:#808080"></div><svg class="abs" style="left:24px;top:254px" width="13" height="13" viewBox="0 0 13 13"><path d="M2.800 6.200l2.600 3l4.800-5.700" stroke="#555" stroke-width="2" fill="none"/></svg>
<svg class="abs" style="left:44px;top:253px" width="14" height="14" viewBox="0 0 14 14" shape-rendering="crispEdges"><rect width="14" height="14" fill="#0080ff"/><path d="M0 0h7l-.5 3.500l-2 3.500l-1.500 5v2h-3z" fill="#ffff80"/><path d="M3 14v-3l1-3l2-2.500l1.500-1.500h1.500l1.500 1.500l2 1l1.500 2v5.500z" fill="#ff8040"/><path d="M6.500 0l-.3 3l1.300 1.500" stroke="#8a8a7a" stroke-width="1" fill="none"/></svg>
<span class="t" style="left:62.5px;top:250.50px;font-size:13px;letter-spacing:0.24px;color:#0c0c0c;">zu-m-4_Tula_buf100.shp</span>
<div style="position:absolute;left:31px;top:276px;width:1px;height:8px;background:repeating-linear-gradient(180deg,#9a9a9a 0 1px,transparent 1px 2px);"></div>
<div style="position:absolute;left:31px;top:283px;width:12px;height:1px;background:repeating-linear-gradient(90deg,#9a9a9a 0 1px,transparent 1px 2px);"></div>
<div style="position:absolute;left:64px;top:278px;width:19px;height:14px;background:#9fe4e4;border:1px solid #8a8a8a;"></div>
<div style="position:absolute;left:3px;top:612px;width:352px;height:1px;background:#8b8b8b;"></div>
<div style="position:absolute;left:3px;top:613px;width:352px;height:1px;background:#fff;"></div>
<div style="position:absolute;left:3px;top:614px;width:352px;height:16px;background:#dfdfdf;border-top:1px solid #6e6e6e;border-bottom:1px solid #6e6e6e;"></div>
<div style="position:absolute;left:3px;top:615px;width:15px;height:14px;background:linear-gradient(90deg,#f0f0f0,#d4d4d4);border-right:1px solid #6e6e6e;"></div>
<svg class="abs" style="left:7px;top:618px" width="6" height="9"><path d="M5.500 0v9l-5-4.500z" fill="#000"/></svg>
<div style="position:absolute;left:18px;top:615px;width:80px;height:14px;background:linear-gradient(#d6e3f2,#aec4de);border-top:1px solid #fff;border-left:1px solid #fff;"></div>
<svg class="abs" style="left:21px;top:617px" width="60" height="10" shape-rendering="crispEdges"><defs><pattern id="bp2" width="4" height="4" patternUnits="userSpaceOnUse"><rect x="0" y="0" width="1" height="1" fill="#ffffff"/><rect x="2" y="2" width="1" height="1" fill="#ffffff"/><rect x="1" y="1" width="1" height="1" fill="#66788e"/><rect x="3" y="3" width="1" height="1" fill="#66788e"/></pattern></defs><rect width="60" height="10" fill="url(#bp2)"/></svg>
<div style="position:absolute;left:0px;top:630px;width:355px;height:2px;background:#fff;"></div>
<div style="position:absolute;left:0px;top:632px;width:355px;height:5px;background:#dfdfdf;"></div>
<div style="position:absolute;left:0px;top:637px;width:355px;height:1px;background:#8b8b8b;"></div>
<div style="position:absolute;left:0px;top:638px;width:355px;height:207px;background:#fff;"></div>
<div style="position:absolute;left:0px;top:612px;width:2px;height:233px;background:#828282;"></div>
<div style="position:absolute;left:864px;top:333px;width:700px;height:505px;background:#c4d2e6;border-top:1px solid #fff;border-left:1px solid #fff;border-right:1px solid #8a8a8a;border-bottom:1px solid #8a8a8a;"></div>
<svg class="abs" style="left:870px;top:336px" width="16" height="16" viewBox="0 0 16 16"><circle cx="7.300" cy="8.400" r="7.500" fill="#f59b16"/><circle cx="7.300" cy="8.400" r="7.500" fill="none" stroke="#d07c08" stroke-width=".6"/><path d="M13.200 4.200c3.800 2.300 3.200 7.500-1.800 11c2.300-3.300 3-7 1.800-11z" fill="#1766b4"/><ellipse cx="14" cy="8.500" rx="1.900" ry="3.200" fill="#1a6cbc"/><text x="7.600" y="11.300" font-family="Liberation Sans" font-weight="bold" font-size="6" fill="#b4680c" text-anchor="middle">SIG</text></svg>
<span class="t b" style="left:892px;top:334.50px;font-size:13px;letter-spacing:0.87px;color:#0c0c0c;">Geoprocessing tools...</span>
<svg class="abs" style="left:1057px;top:337px" width="481" height="16" shape-rendering="crispEdges"><defs><pattern id="bp3" width="4" height="4" patternUnits="userSpaceOnUse"><rect width="4" height="4" fill="#c4d2e6"/><rect x="0" y="0" width="1" height="1" fill="#ffffff"/><rect x="2" y="2" width="1" height="1" fill="#ffffff"/><rect x="1" y="1" width="1" height="1" fill="#4e5866"/><rect x="3" y="3" width="1" height="1" fill="#4e5866"/></pattern></defs><rect width="481" height="16" fill="url(#bp3)"/></svg>
<div style="position:absolute;left:1544px;top:337px;width:15px;height:15px;background:#fff;"></div>
<div style="position:absolute;left:1544px;top:337px;width:14px;height:14px;background:#c4d2e6;border:2px solid #111;"></div>
<svg class="abs" style="left:1544px;top:337px" width="14" height="14"><path d="M4 4l6 6M10 4l-6 6" stroke="#555" stroke-width="1.800" fill="none"/></svg>
<div style="position:absolute;left:865px;top:355px;width:698px;height:3px;background:#828282;"></div>
<div style="position:absolute;left:865px;top:358px;width:698px;height:479px;background:#dfdfdf;"></div>
<div style="position:absolute;left:865px;top:358px;width:241px;height:444px;background:#fff;border-left:2px solid #828282;border-right:1px solid #828282;border-bottom:1px solid #828282;"></div>
<div style="position:absolute;left:1106px;top:358px;width:6px;height:444px;background:#dfdfdf;border-left:1px solid #fff;"></div>
<div style="position:absolute;left:1112px;top:358px;width:451px;height:444px;background:#fff;border-left:2px solid #828282;border-bottom:1px solid #828282;"></div>
<div style="position:absolute;left:865px;top:802px;width:698px;height:1px;background:#fff;"></div>
<div style="position:absolute;left:865px;top:803px;width:698px;height:1px;background:#8b8b8b;"></div>
<div style="position:absolute;left:865px;top:804px;width:698px;height:1px;background:#fff;"></div>
<div style="position:absolute;left:966px;top:412px;width:82px;height:18px;background:#b8cfe5;"></div>
<div class="abs" style="left:867px;top:358px;width:238px;height:428px;overflow:hidden"><div class="abs" style="left:-867px;top:-358px;width:1569px;height:845px"><div style="position:absolute;left:894px;top:376px;width:1px;height:5px;background:repeating-linear-gradient(180deg,#9a9a9a 0 1px,transparent 1px 2px);"></div><div style="position:absolute;left:894px;top:390px;width:1px;height:207px;background:repeating-linear-gradient(180deg,#9a9a9a 0 1px,transparent 1px 2px);"></div><div style="position:absolute;left:914px;top:390px;width:1px;height:9px;background:repeating-linear-gradient(180deg,#9a9a9a 0 1px,transparent 1px 2px);"></div><div style="position:absolute;left:914px;top:408px;width:1px;height:153px;background:repeating-linear-gradient(180deg,#9a9a9a 0 1px,transparent 1px 2px);"></div><div style="position:absolute;left:934px;top:408px;width:1px;height:50px;background:repeating-linear-gradient(180deg,#9a9a9a 0 1px,transparent 1px 2px);"></div><div style="position:absolute;left:934px;top:498px;width:1px;height:14px;background:repeating-linear-gradient(180deg,#9a9a9a 0 1px,transparent 1px 2px);"></div><div style="position:absolute;left:934px;top:534px;width:1px;height:14px;background:repeating-linear-gradient(180deg,#9a9a9a 0 1px,transparent 1px 2px);"></div><div style="position:absolute;left:934px;top:570px;width:1px;height:14px;background:repeating-linear-gradient(180deg,#9a9a9a 0 1px,transparent 1px 2px);"></div><div style="position:absolute;left:914px;top:606px;width:1px;height:50px;background:repeating-linear-gradient(180deg,#9a9a9a 0 1px,transparent 1px 2px);"></div><svg class="abs" style="left:870px;top:363px" width="9" height="9" viewBox="0 0 9 9"><defs><linearGradient id="tg" x1="0" y1="0" x2="0" y2="1"><stop offset="0" stop-color="#fff"/><stop offset="1" stop-color="#d8d0c0"/></linearGradient></defs><rect x=".5" y=".5" width="8" height="8" rx="1.500" fill="url(#tg)" stroke="#8a8a8a"/><path d="M2 4.500h5" stroke="#000" stroke-width="1.200"/></svg><div style="position:absolute;left:881px;top:367px;width:5px;height:1px;background:repeating-linear-gradient(90deg,#9a9a9a 0 1px,transparent 1px 2px);"></div><svg class="abs" style="left:887px;top:361px" width="17" height="12" viewBox="0 0 17 12"><path d="M.5 11.500v-10l1.500-1h3.500l1.500 1.500h5.500v2.500" fill="#fbf0a8" stroke="#a08c28" stroke-width="1"/><path d="M.8 11.500l3.700-6.500h11.500l-4.500 6.500z" fill="#d9bc3c" stroke="#7d6a14" stroke-width="1"/></svg><span class="t" style="left:908px;top:357.50px;font-size:13px;letter-spacing:0.53px;color:#0c0c0c;">Geoprocessing tools</span><svg class="abs" style="left:890px;top:381px" width="9" height="9" viewBox="0 0 9 9"><defs><linearGradient id="tg" x1="0" y1="0" x2="0" y2="1"><stop offset="0" stop-color="#fff"/><stop offset="1" stop-color="#d8d0c0"/></linearGradient></defs><rect x=".5" y=".5" width="8" height="8" rx="1.500" fill="url(#tg)" stroke="#8a8a8a"/><path d="M2 4.500h5" stroke="#000" stroke-width="1.200"/></svg><div style="position:absolute;left:901px;top:385px;width:5px;height:1px;background:repeating-linear-gradient(90deg,#9a9a9a 0 1px,transparent 1px 2px);"></div><svg class="abs" style="left:907px;top:379px" width="17" height="12" viewBox="0 0 17 12"><path d="M.5 11.500v-10l1.500-1h3.500l1.500 1.500h5.500v2.500" fill="#fbf0a8" stroke="#a08c28" stroke-width="1"/><path d="M.8 11.500l3.700-6.500h11.500l-4.500 6.500z" fill="#d9bc3c" stroke="#7d6a14" stroke-width="1"/></svg><span class="t" style="left:927.5px;top:375.50px;font-size:13px;letter-spacing:0.13px;color:#0c0c0c;">Analysis</span><svg class="abs" style="left:910px;top:399px" width="9" height="9" viewBox="0 0 9 9"><defs><linearGradient id="tg" x1="0" y1="0" x2="0" y2="1"><stop offset="0" stop-color="#fff"/><stop offset="1" stop-color="#d8d0c0"/></linearGradient></defs><rect x=".5" y=".5" width="8" height="8" rx="1.500" fill="url(#tg)" stroke="#8a8a8a"/><path d="M2 4.500h5" stroke="#000" stroke-width="1.200"/></svg><div style="position:absolute;left:921px;top:403px;width:5px;height:1px;background:repeating-linear-gradient(90deg,#9a9a9a 0 1px,transparent 1px 2px);"></div><svg class="abs" style="left:927px;top:397px" width="17" height="12" viewBox="0 0 17 12"><path d="M.5 11.500v-10l1.500-1h3.500l1.500 1.500h5.500v2.500" fill="#fbf0a8" stroke="#a08c28" stroke-width="1"/><path d="M.8 11.500l3.700-6.500h11.500l-4.500 6.500z" fill="#d9bc3c" stroke="#7d6a14" stroke-width="1"/></svg><span class="t" style="left:947.5px;top:393.50px;font-size:13px;letter-spacing:0.23px;color:#0c0c0c;">Proximity</span><div style="position:absolute;left:935px;top:421px;width:12px;height:1px;background:repeating-linear-gradient(90deg,#9a9a9a 0 1px,transparent 1px 2px);"></div><svg class="abs" style="left:948px;top:414px" width="11" height="14" viewBox="0 0 11 14"><defs><linearGradient id="dg" x1="0" y1="0" x2="0" y2="1"><stop offset=".6" stop-color="#fff"/><stop offset="1" stop-color="#f0ecd8"/></linearGradient></defs><path d="M.5 .5h7l3 3v10h-10z" fill="url(#dg)" stroke="#787878" stroke-width="1"/><path d="M7.500 .5v3h3" fill="#f4f0dc" stroke="#787878" stroke-width="1"/></svg><span class="t" style="left:967.5px;top:411.50px;font-size:13px;letter-spacing:0.31px;color:#0c0c0c;">Buffer zones</span><div style="position:absolute;left:935px;top:439px;width:12px;height:1px;background:repeating-linear-gradient(90deg,#9a9a9a 0 1px,transparent 1px 2px);"></div><svg class="abs" style="left:948px;top:432px" width="11" height="14" viewBox="0 0 11 14"><defs><linearGradient id="dg" x1="0" y1="0" x2="0" y2="1"><stop offset=".6" stop-color="#fff"/><stop offset="1" stop-color="#f0ecd8"/></linearGradient></defs><path d="M.5 .5h7l3 3v10h-10z" fill="url(#dg)" stroke="#787878" stroke-width="1"/><path d="M7.500 .5v3h3" fill="#f4f0dc" stroke="#787878" stroke-width="1"/></svg><span class="t" style="left:967.5px;top:429.50px;font-size:13px;letter-spacing:0.4px;color:#0c0c0c;">Spatial join</span><div style="position:absolute;left:935px;top:457px;width:12px;height:1px;background:repeating-linear-gradient(90deg,#9a9a9a 0 1px,transparent 1px 2px);"></div><svg class="abs" style="left:948px;top:450px" width="11" height="14" viewBox="0 0 11 14"><defs><linearGradient id="dg" x1="0" y1="0" x2="0" y2="1"><stop offset=".6" stop-color="#fff"/><stop offset="1" stop-color="#f0ecd8"/></linearGradient></defs><path d="M.5 .5h7l3 3v10h-10z" fill="url(#dg)" stroke="#787878" stroke-width="1"/><path d="M7.500 .5v3h3" fill="#f4f0dc" stroke="#787878" stroke-width="1"/></svg><span class="t" style="left:967.5px;top:447.50px;font-size:13px;letter-spacing:0.55px;color:#0c0c0c;">Lateral buffer</span><svg class="abs" style="left:910px;top:471px" width="9" height="9" viewBox="0 0 9 9"><defs><linearGradient id="tg" x1="0" y1="0" x2="0" y2="1"><stop offset="0" stop-color="#fff"/><stop offset="1" stop-color="#d8d0c0"/></linearGradient></defs><rect x=".5" y=".5" width="8" height="8" rx="1.500" fill="url(#tg)" stroke="#8a8a8a"/><path d="M2 4.500h5" stroke="#000" stroke-width="1.200"/><path d="M4.500 2v5" stroke="#000" stroke-width="1.200"/></svg><div style="position:absolute;left:921px;top:475px;width:5px;height:1px;background:repeating-linear-gradient(90deg,#9a9a9a 0 1px,transparent 1px 2px);"></div><svg class="abs" style="left:927px;top:469px" width="13" height="11" viewBox="0 0 13 11"><defs><linearGradient id="cfg" x1="0" y1="0" x2="1" y2="1"><stop offset="0" stop-color="#ffffe0"/><stop offset=".45" stop-color="#f6dc70"/><stop offset="1" stop-color="#dcbc3c"/></linearGradient></defs><path d="M2.500 2.500v-2h4v2" fill="#f0dc60" stroke="#8c8a10" stroke-width="1"/><rect x=".5" y="2.500" width="12" height="8" fill="url(#cfg)" stroke="#8c8a10" stroke-width="1"/></svg><span class="t" style="left:947.5px;top:465.50px;font-size:13px;letter-spacing:0.12px;color:#0c0c0c;">Overlay</span><svg class="abs" style="left:910px;top:489px" width="9" height="9" viewBox="0 0 9 9"><defs><linearGradient id="tg" x1="0" y1="0" x2="0" y2="1"><stop offset="0" stop-color="#fff"/><stop offset="1" stop-color="#d8d0c0"/></linearGradient></defs><rect x=".5" y=".5" width="8" height="8" rx="1.500" fill="url(#tg)" stroke="#8a8a8a"/><path d="M2 4.500h5" stroke="#000" stroke-width="1.200"/></svg><div style="position:absolute;left:921px;top:493px;width:5px;height:1px;background:repeating-linear-gradient(90deg,#9a9a9a 0 1px,transparent 1px 2px);"></div><svg class="abs" style="left:927px;top:487px" width="17" height="12" viewBox="0 0 17 12"><path d="M.5 11.500v-10l1.500-1h3.500l1.500 1.500h5.500v2.500" fill="#fbf0a8" stroke="#a08c28" stroke-width="1"/><path d="M.8 11.500l3.700-6.500h11.500l-4.500 6.500z" fill="#d9bc3c" stroke="#7d6a14" stroke-width="1"/></svg><span class="t" style="left:947.5px;top:483.50px;font-size:13px;letter-spacing:0.61px;color:#0c0c0c;">Computational geometry</span><div style="position:absolute;left:935px;top:511px;width:12px;height:1px;background:repeating-linear-gradient(90deg,#9a9a9a 0 1px,transparent 1px 2px);"></div><svg class="abs" style="left:948px;top:504px" width="11" height="14" viewBox="0 0 11 14"><defs><linearGradient id="dg" x1="0" y1="0" x2="0" y2="1"><stop offset=".6" stop-color="#fff"/><stop offset="1" stop-color="#f0ecd8"/></linearGradient></defs><path d="M.5 .5h7l3 3v10h-10z" fill="url(#dg)" stroke="#787878" stroke-width="1"/><path d="M7.500 .5v3h3" fill="#f4f0dc" stroke="#787878" stroke-width="1"/></svg><span class="t" style="left:967.5px;top:501.50px;font-size:13px;letter-spacing:0.15px;color:#0c0c0c;">Convex hull</span><svg class="abs" style="left:910px;top:525px" width="9" height="9" viewBox="0 0 9 9"><defs><linearGradient id="tg" x1="0" y1="0" x2="0" y2="1"><stop offset="0" stop-color="#fff"/><stop offset="1" stop-color="#d8d0c0"/></linearGradient></defs><rect x=".5" y=".5" width="8" height="8" rx="1.500" fill="url(#tg)" stroke="#8a8a8a"/><path d="M2 4.500h5" stroke="#000" stroke-width="1.200"/></svg><div style="position:absolute;left:921px;top:529px;width:5px;height:1px;background:repeating-linear-gradient(90deg,#9a9a9a 0 1px,transparent 1px 2px);"></div><svg class="abs" style="left:927px;top:523px" width="17" height="12" viewBox="0 0 17 12"><path d="M.5 11.500v-10l1.500-1h3.500l1.500 1.500h5.500v2.500" fill="#fbf0a8" stroke="#a08c28" stroke-width="1"/><path d="M.8 11.500l3.700-6.500h11.500l-4.500 6.500z" fill="#d9bc3c" stroke="#7d6a14" stroke-width="1"/></svg><span class="t" style="left:947.5px;top:519.50px;font-size:13px;letter-spacing:0.62px;color:#0c0c0c;">Aggregation</span><div style="position:absolute;left:935px;top:547px;width:12px;height:1px;background:repeating-linear-gradient(90deg,#9a9a9a 0 1px,transparent 1px 2px);"></div><svg class="abs" style="left:948px;top:540px" width="11" height="14" viewBox="0 0 11 14"><defs><linearGradient id="dg" x1="0" y1="0" x2="0" y2="1"><stop offset=".6" stop-color="#fff"/><stop offset="1" stop-color="#f0ecd8"/></linearGradient></defs><path d="M.5 .5h7l3 3v10h-10z" fill="url(#dg)" stroke="#787878" stroke-width="1"/><path d="M7.500 .5v3h3" fill="#f4f0dc" stroke="#787878" stroke-width="1"/></svg><span class="t" style="left:967.5px;top:537.50px;font-size:13px;letter-spacing:0.1px;color:#0c0c0c;">Dissolve</span><svg class="abs" style="left:910px;top:561px" width="9" height="9" viewBox="0 0 9 9"><defs><linearGradient id="tg" x1="0" y1="0" x2="0" y2="1"><stop offset="0" stop-color="#fff"/><stop offset="1" stop-color="#d8d0c0"/></linearGradient></defs><rect x=".5" y=".5" width="8" height="8" rx="1.500" fill="url(#tg)" stroke="#8a8a8a"/><path d="M2 4.500h5" stroke="#000" stroke-width="1.200"/></svg><div style="position:absolute;left:921px;top:565px;width:5px;height:1px;background:repeating-linear-gradient(90deg,#9a9a9a 0 1px,transparent 1px 2px);"></div><svg class="abs" style="left:927px;top:559px" width="17" height="12" viewBox="0 0 17 12"><path d="M.5 11.500v-10l1.500-1h3.500l1.500 1.500h5.500v2.500" fill="#fbf0a8" stroke="#a08c28" stroke-width="1"/><path d="M.8 11.500l3.700-6.500h11.500l-4.500 6.500z" fill="#d9bc3c" stroke="#7d6a14" stroke-width="1"/></svg><span class="t" style="left:947.5px;top:555.50px;font-size:13px;letter-spacing:0.62px;color:#0c0c0c;">Geoprocessing tools that</span><div style="position:absolute;left:935px;top:583px;width:12px;height:1px;background:repeating-linear-gradient(90deg,#9a9a9a 0 1px,transparent 1px 2px);"></div><svg class="abs" style="left:948px;top:576px" width="11" height="14" viewBox="0 0 11 14"><defs><linearGradient id="dg" x1="0" y1="0" x2="0" y2="1"><stop offset=".6" stop-color="#fff"/><stop offset="1" stop-color="#f0ecd8"/></linearGradient></defs><path d="M.5 .5h7l3 3v10h-10z" fill="url(#dg)" stroke="#787878" stroke-width="1"/><path d="M7.500 .5v3h3" fill="#f4f0dc" stroke="#787878" stroke-width="1"/></svg><span class="t" style="left:967.5px;top:573.50px;font-size:13px;letter-spacing:0.34px;color:#0c0c0c;">Split lines</span><svg class="abs" style="left:890px;top:597px" width="9" height="9" viewBox="0 0 9 9"><defs><linearGradient id="tg" x1="0" y1="0" x2="0" y2="1"><stop offset="0" stop-color="#fff"/><stop offset="1" stop-color="#d8d0c0"/></linearGradient></defs><rect x=".5" y=".5" width="8" height="8" rx="1.500" fill="url(#tg)" stroke="#8a8a8a"/><path d="M2 4.500h5" stroke="#000" stroke-width="1.200"/></svg><div style="position:absolute;left:901px;top:601px;width:5px;height:1px;background:repeating-linear-gradient(90deg,#9a9a9a 0 1px,transparent 1px 2px);"></div><svg class="abs" style="left:907px;top:595px" width="17" height="12" viewBox="0 0 17 12"><path d="M.5 11.500v-10l1.500-1h3.500l1.500 1.500h5.500v2.500" fill="#fbf0a8" stroke="#a08c28" stroke-width="1"/><path d="M.8 11.500l3.700-6.500h11.500l-4.500 6.500z" fill="#d9bc3c" stroke="#7d6a14" stroke-width="1"/></svg><span class="t" style="left:927.5px;top:591.50px;font-size:13px;letter-spacing:0.55px;color:#0c0c0c;">Data conversion</span><div style="position:absolute;left:915px;top:619px;width:12px;height:1px;background:repeating-linear-gradient(90deg,#9a9a9a 0 1px,transparent 1px 2px);"></div><svg class="abs" style="left:928px;top:612px" width="11" height="14" viewBox="0 0 11 14"><defs><linearGradient id="dg" x1="0" y1="0" x2="0" y2="1"><stop offset=".6" stop-color="#fff"/><stop offset="1" stop-color="#f0ecd8"/></linearGradient></defs><path d="M.5 .5h7l3 3v10h-10z" fill="url(#dg)" stroke="#787878" stroke-width="1"/><path d="M7.500 .5v3h3" fill="#f4f0dc" stroke="#787878" stroke-width="1"/></svg><span class="t" style="left:947.5px;top:609.50px;font-size:13px;letter-spacing:0.21px;color:#0c0c0c;">Merge</span><div style="position:absolute;left:915px;top:637px;width:12px;height:1px;background:repeating-linear-gradient(90deg,#9a9a9a 0 1px,transparent 1px 2px);"></div><svg class="abs" style="left:928px;top:630px" width="11" height="14" viewBox="0 0 11 14"><defs><linearGradient id="dg" x1="0" y1="0" x2="0" y2="1"><stop offset=".6" stop-color="#fff"/><stop offset="1" stop-color="#f0ecd8"/></linearGradient></defs><path d="M.5 .5h7l3 3v10h-10z" fill="url(#dg)" stroke="#787878" stroke-width="1"/><path d="M7.500 .5v3h3" fill="#f4f0dc" stroke="#787878" stroke-width="1"/></svg><span class="t" style="left:947.5px;top:627.50px;font-size:13px;letter-spacing:0.14px;color:#0c0c0c;">XY shift (2D)</span><div style="position:absolute;left:915px;top:655px;width:12px;height:1px;background:repeating-linear-gradient(90deg,#9a9a9a 0 1px,transparent 1px 2px);"></div><svg class="abs" style="left:928px;top:648px" width="11" height="14" viewBox="0 0 11 14"><defs><linearGradient id="dg" x1="0" y1="0" x2="0" y2="1"><stop offset=".6" stop-color="#fff"/><stop offset="1" stop-color="#f0ecd8"/></linearGradient></defs><path d="M.5 .5h7l3 3v10h-10z" fill="url(#dg)" stroke="#787878" stroke-width="1"/><path d="M7.500 .5v3h3" fill="#f4f0dc" stroke="#787878" stroke-width="1"/></svg><span class="t" style="left:947.5px;top:645.50px;font-size:13px;letter-spacing:0.38px;color:#0c0c0c;">Reproject</span></div></div>
<div style="position:absolute;left:867px;top:786px;width:238px;height:15px;background:#dfdfdf;border-top:1px solid #6e6e6e;"></div>
<div style="position:absolute;left:867px;top:787px;width:16px;height:14px;background:linear-gradient(90deg,#f4f4f4,#d6d6d6);border-right:1px solid #6e6e6e;"></div>
<svg class="abs" style="left:870.5px;top:789.5px" width="6" height="8"><path d="M5.500 0v8l-4.500-4z" fill="#000"/></svg>
<div style="position:absolute;left:883px;top:787px;width:80px;height:14px;background:linear-gradient(#d6e3f2,#aec4de);border-top:1px solid #fff;border-left:1px solid #fff;border-right:1px solid #6e6e6e;"></div>
<svg class="abs" style="left:886px;top:789px" width="72" height="10" shape-rendering="crispEdges"><defs><pattern id="bp4" width="4" height="4" patternUnits="userSpaceOnUse"><rect x="0" y="0" width="1" height="1" fill="#ffffff"/><rect x="2" y="2" width="1" height="1" fill="#ffffff"/><rect x="1" y="1" width="1" height="1" fill="#66788e"/><rect x="3" y="3" width="1" height="1" fill="#66788e"/></pattern></defs><rect width="72" height="10" fill="url(#bp4)"/></svg>
<div style="position:absolute;left:1089px;top:787px;width:16px;height:14px;background:linear-gradient(90deg,#f4f4f4,#d6d6d6);border-left:1px solid #6e6e6e;"></div>
<svg class="abs" style="left:1094.5px;top:789.5px" width="6" height="8"><path d="M.5 0v8l4.500-4z" fill="#000"/></svg>
<span class="t sf b" style="left:1117px;top:373.77px;font-size:15.5px;letter-spacing:1.15px;color:#7a0a12;">Buffer</span>
<span class="t sf" style="left:1116.5px;top:405.60px;font-size:16px;letter-spacing:0.5px;color:#1a0a1a;">This geoprocess creates a new polygon layer, with polygon</span>
<span class="t sf" style="left:1116.5px;top:422.60px;font-size:16px;letter-spacing:0.61px;color:#1a0a1a;">buffers of the geometries of the input layer.</span>
<span class="t sf" style="left:1116.5px;top:454.90px;font-size:16px;letter-spacing:0.62px;color:#1a0a1a;">Input layer geometries could have any geometry type (point,</span>
<span class="t sf" style="left:1116.5px;top:471.90px;font-size:16px;letter-spacing:0.58px;color:#1a0a1a;">line or polygon). For each input geometry, you could create</span>
<span class="t sf" style="left:1116.5px;top:488.90px;font-size:16px;letter-spacing:0.49px;color:#1a0a1a;">one or many equidistant polygon buffer rings. Also, if input</span>
<span class="t sf" style="left:1116.5px;top:505.90px;font-size:16px;letter-spacing:0.58px;color:#1a0a1a;">geometry type is polygon, the buffer could be internal,</span>
<span class="t sf" style="left:1116.5px;top:522.90px;font-size:16px;letter-spacing:0.66px;color:#1a0a1a;">external or both.</span>
<svg class="abs" style="left:1116px;top:557px" width="271" height="244" viewBox="1116 557 271 244"><rect x="1116.500" y="557.500" width="270" height="260" fill="#dedede" stroke="#b4b4b4"/><circle cx="1291.9" cy="653" r="61" fill="#96806a"/><circle cx="1261.8" cy="668" r="61" fill="#96806a"/><circle cx="1277.2" cy="727.8" r="61" fill="#96806a"/><circle cx="1217.5" cy="742.5" r="61" fill="#96806a"/><circle cx="1291.9" cy="653" r="51.7" fill="#c0a060"/><circle cx="1261.8" cy="668" r="51.7" fill="#c0a060"/><circle cx="1277.2" cy="727.8" r="51.7" fill="#c0a060"/><circle cx="1217.5" cy="742.5" r="51.7" fill="#c0a060"/><circle cx="1291.9" cy="653" r="42" fill="#e87860"/><circle cx="1261.8" cy="668" r="42" fill="#e87860"/><circle cx="1277.2" cy="727.8" r="42" fill="#e87860"/><circle cx="1217.5" cy="742.5" r="42" fill="#e87860"/><circle cx="1291.9" cy="653" r="32.5" fill="#f09868"/><circle cx="1261.8" cy="668" r="32.5" fill="#f09868"/><circle cx="1277.2" cy="727.8" r="32.5" fill="#f09868"/><circle cx="1217.5" cy="742.5" r="32.5" fill="#f09868"/><circle cx="1291.9" cy="653" r="22.7" fill="#f8c000"/><circle cx="1261.8" cy="668" r="22.7" fill="#f8c000"/><circle cx="1277.2" cy="727.8" r="22.7" fill="#f8c000"/><circle cx="1217.5" cy="742.5" r="22.7" fill="#f8c000"/><circle cx="1291.9" cy="653" r="13" fill="#f5c090"/><circle cx="1261.8" cy="668" r="13" fill="#f5c090"/><circle cx="1277.2" cy="727.8" r="13" fill="#f5c090"/><circle cx="1217.5" cy="742.5" r="13" fill="#f5c090"/><circle cx="1291.9" cy="653" r="3.800" fill="#904080"/><circle cx="1261.8" cy="668" r="3.800" fill="#904080"/><circle cx="1277.2" cy="727.8" r="3.800" fill="#904080"/><circle cx="1217.5" cy="742.5" r="3.800" fill="#904080"/></svg>
<div style="position:absolute;left:1546px;top:358px;width:17px;height:443px;background:#dfdfdf;border-left:1px solid #7a7a7a;"></div>
<div style="position:absolute;left:1561px;top:358px;width:1px;height:443px;background:#7a7a7a;"></div>
<div style="position:absolute;left:1562px;top:358px;width:1px;height:443px;background:#fff;"></div>
<div style="position:absolute;left:1547px;top:358px;width:14px;height:16px;background:linear-gradient(90deg,#f4f4f4,#d0d0d0);border-bottom:1px solid #7a7a7a;"></div>
<svg class="abs" style="left:1550px;top:363px" width="9" height="5"><path d="M.3 4.500h8.400l-4.200-4.300z" fill="#000"/></svg>
<div style="position:absolute;left:1547px;top:374px;width:14px;height:374px;background:linear-gradient(90deg,#d6e3f2,#aec4de);border-top:1px solid #fff;border-left:1px solid #fff;border-bottom:1px solid #6e6e6e;"></div>
<svg class="abs" style="left:1549px;top:377px" width="11" height="368" shape-rendering="crispEdges"><defs><pattern id="bp5" width="4" height="4" patternUnits="userSpaceOnUse"><rect x="0" y="0" width="1" height="1" fill="#ffffff"/><rect x="2" y="2" width="1" height="1" fill="#ffffff"/><rect x="1" y="1" width="1" height="1" fill="#66788e"/><rect x="3" y="3" width="1" height="1" fill="#66788e"/></pattern></defs><rect width="11" height="368" fill="url(#bp5)"/></svg>
<div style="position:absolute;left:1547px;top:785px;width:14px;height:16px;background:linear-gradient(90deg,#f4f4f4,#d0d0d0);border-top:1px solid #7a7a7a;border-bottom:1px solid #7a7a7a;"></div>
<svg class="abs" style="left:1550px;top:791px" width="9" height="5"><path d="M0 0h9l-4.500 5z" fill="#000"/></svg>
<div class="btn" style="left:1123px;top:811px;width:85px;height:21px"></div>
<span class="t" style="left:1129.7px;top:810.70px;font-size:13px;letter-spacing:0.33px;color:#0c0c0c;">Open tool...</span>
<div class="btn" style="left:1258px;top:811px;width:46px;height:21px"></div>
<span class="t" style="left:1264px;top:810.70px;font-size:13px;letter-spacing:0.01px;color:#0c0c0c;">Close</span>
<div style="position:absolute;left:77px;top:411px;width:686px;height:440px;border-radius:6px 6px 0 0;box-shadow:0 3px 9px 0 rgba(0,0,0,.32);background:#dfdfdf;"></div>
<div style="position:absolute;left:77px;top:411px;width:686px;height:29px;border-radius:6px 6px 0 0;background:linear-gradient(#4c4b46,#3f3e3a 55%,#3b3a36);border-top:1px solid #5a5954;"></div>
<div style="position:absolute;left:77px;top:440px;width:1px;height:420px;background:#8e8d88;"></div>
<div style="position:absolute;left:762px;top:440px;width:1px;height:420px;background:#76756f;"></div>
<div style="position:absolute;left:78px;top:440px;width:684px;height:1px;background:#f4f4f4;"></div>
<div style="position:absolute;left:89px;top:418px;width:15px;height:15px;border-radius:50%;background:linear-gradient(#f28a5c,#e8541a 60%,#df4a12);border:1px solid #a4401a;"></div>
<svg class="abs" style="left:89px;top:418px" width="15" height="15"><path d="M5 5l5 5M10 5l-5 5" stroke="#4a2010" stroke-width="1.200" fill="none"/></svg>
<span class="t b" style="left:117.5px;top:416.15px;font-size:14px;letter-spacing:0.25px;color:#dfdbd2;">Processing tools</span>
<span class="t" style="left:83px;top:442.50px;font-size:13px;letter-spacing:0.53px;color:#0c0c0c;">Data input for buffer zones:</span>
<span class="t" style="left:83px;top:471.50px;font-size:13px;letter-spacing:0.42px;color:#0c0c0c;">Input layer:</span>
<span class="t" style="left:100.4px;top:501.50px;font-size:13px;letter-spacing:0.59px;color:#9d9d9d;">Use selected features only</span>
<span class="t" style="left:83px;top:528.50px;font-size:13px;letter-spacing:0.58px;color:#0c0c0c;">Number of selected features:</span>
<span class="t" style="left:357.7px;top:528.50px;font-size:13px;letter-spacing:-0.2px;color:#0c0c0c;">351</span>
<span class="t" style="left:100.4px;top:557.50px;font-size:13px;letter-spacing:0.6px;color:#0c0c0c;">Constant buffer distance:</span>
<span class="t" style="left:100.4px;top:589.50px;font-size:13px;letter-spacing:0.6px;color:#0c0c0c;">Buffer distances in attribute table field:</span>
<span class="t" style="left:100.3px;top:620.00px;font-size:13px;letter-spacing:0.42px;color:#0c0c0c;">Merge overlapping zones</span>
<span class="t" style="left:502px;top:620.00px;font-size:13px;letter-spacing:0.68px;color:#0c0c0c;">Do not round edges</span>
<span class="t" style="left:83px;top:650.50px;font-size:13px;letter-spacing:0.41px;color:#0c0c0c;">Buffer zones for polygons:</span>
<span class="t" style="left:83px;top:682.50px;font-size:13px;letter-spacing:0.51px;color:#0c0c0c;">Number of concentric buffer zones:</span>
<span class="t" style="left:83px;top:714.50px;font-size:13px;letter-spacing:0.46px;color:#0c0c0c;">Output layer:</span>
<div style="position:absolute;left:357px;top:470px;width:400px;height:22px;border:1px solid #7c7c7c;border-radius:3px;background:linear-gradient(#f2f2f2,#e2e2e2 50%,#cdcdcd);box-shadow:inset 0 0 0 2px #bcd2ec;"></div>
<span class="t" style="left:360px;top:470.50px;font-size:13px;letter-spacing:0.2px;color:#0c0c0c;">zu-m-4_Tula_buf100.shp</span>
<svg class="abs" style="left:744.0px;top:478.5px" width="9" height="5"><path d="M0 0h9l-4.5 5z" fill="#000"/></svg>
<div class="cb" style="left:83px;top:505px;border-color:#b4b4b4"></div>
<div class="rb" style="left:83px;top:561px"></div><div style="position:absolute;left:87px;top:565px;width:5px;height:5px;border-radius:50%;background:#444;"></div>
<div class="tf" style="left:357px;top:556px;width:400px;height:22px"></div>
<div class="rb" style="left:83px;top:593px"></div>
<div style="position:absolute;left:357px;top:588px;width:400px;height:22px;border:1px solid #adadad;border-radius:3px;background:#e0e0e0;"></div>
<span class="t" style="left:361px;top:589.00px;font-size:13px;letter-spacing:-0.97px;color:#a8a8a8;">CADNUMBER</span>
<svg class="abs" style="left:744.0px;top:596.5px" width="9" height="5"><path d="M0 0h9l-4.5 5z" fill="#a0a0a0"/></svg>
<div class="cb" style="left:83px;top:623px;border-color:#808080"></div>
<div class="cb" style="left:485px;top:623px;border-color:#808080"></div>
<div class="btn" style="left:480px;top:649px;width:154px;height:22px"></div>
<span class="t" style="left:483.3px;top:650.00px;font-size:13px;letter-spacing:0.4px;color:#0c0c0c;">External</span>
<svg class="abs" style="left:621.0px;top:657.5px" width="9" height="5"><path d="M0 0h9l-4.5 5z" fill="#000"/></svg>
<div class="tf" style="left:357px;top:681px;width:386px;height:22px"></div>
<span class="t" style="left:361px;top:681.50px;font-size:13px;letter-spacing:0.5px;color:#0c0c0c;">1</span>
<div style="position:absolute;left:742px;top:681px;width:15px;height:11px;border:1px solid #7f7f7f;border-radius:0 3px 0 0;background:linear-gradient(#f4f4f4,#dcdcdc);"></div>
<div style="position:absolute;left:742px;top:692px;width:15px;height:11px;border:1px solid #7f7f7f;border-top:none;border-radius:0 0 3px 0;background:linear-gradient(#ececec,#d4d4d4);"></div>
<svg class="abs" style="left:746px;top:685px" width="7" height="4"><path d="M0 4h7l-3.500-4z" fill="#000"/></svg>
<svg class="abs" style="left:746px;top:695px" width="7" height="4"><path d="M0 0h7l-3.500 4z" fill="#000"/></svg>
<div class="tf" style="left:357px;top:713px;width:281px;height:22px"></div>
<div class="btn" style="left:686px;top:713px;width:71px;height:22px"></div>
<span class="t" style="left:692.4px;top:714.00px;font-size:13px;letter-spacing:0.21px;color:#0c0c0c;">Choose...</span>
<div class="btn" style="left:572px;top:820px;width:90px;height:23px"></div>
<span class="t" style="left:609.7px;top:821.50px;font-size:13px;letter-spacing:-0.5px;color:#0c0c0c;">Ok</span>
<div class="btn" style="left:667px;top:820px;width:90px;height:23px"></div>
<span class="t" style="left:691.3px;top:821.50px;font-size:13px;letter-spacing:0.25px;color:#0c0c0c;">Cancel</span>
</body></html>
